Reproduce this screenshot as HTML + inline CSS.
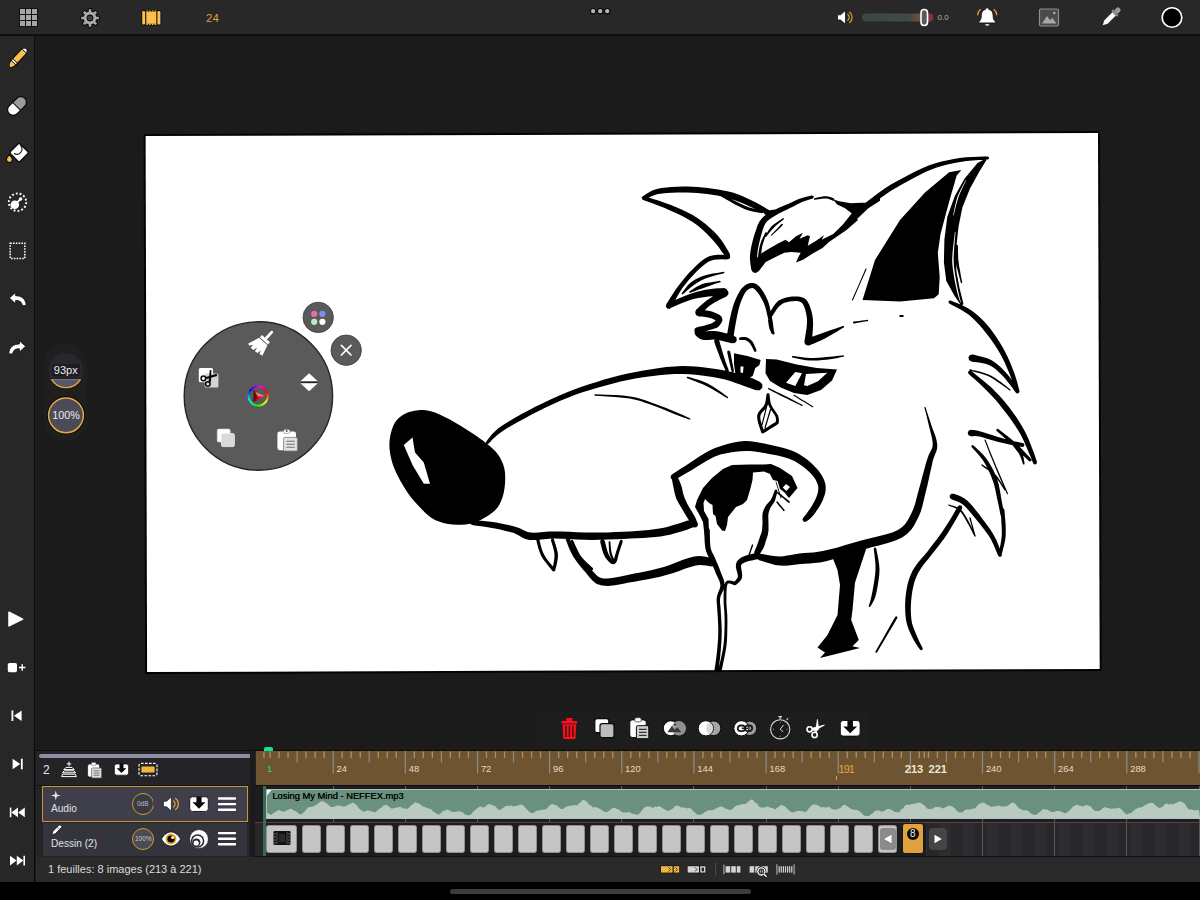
<!DOCTYPE html>
<html><head><meta charset="utf-8"><title>Animation</title><style>
*{box-sizing:border-box;margin:0;padding:0}
html,body{width:1200px;height:900px;overflow:hidden;background:#1b1b1b;font-family:"Liberation Sans",sans-serif;}
.abs{position:absolute}
#topbar{position:absolute;left:0;top:0;width:1200px;height:36px;background:#282828;border-bottom:2px solid #0f0f0f}
#side{position:absolute;left:0;top:36px;width:35px;height:846px;background:#272727;border-right:1px solid #0a0a0a}
#status{position:absolute;left:36px;top:856.7px;width:1164px;height:25.8px;background:#2a2a2a}
#bottom{position:absolute;left:0;top:882.4px;width:1200px;height:18px;background:#000}
#home{position:absolute;left:450px;top:889px;width:301px;height:5px;border-radius:3px;background:#3c3c3c}
#tl{position:absolute;left:36px;top:750px;width:1164px;height:107px;background:#242427;border-top:1px solid #0c0c0c}
.t{position:absolute;white-space:nowrap;line-height:1}
</style></head><body>
<div id="topbar"></div><div id="side"></div>
<svg class="abs" style="left:0;top:0" width="1200" height="900" viewBox="0 0 1200 900"><path d="M143.6 134.2L1100 131.1L1101.7 671L145.1 674Z" fill="#030303"/><path d="M145.6 136.1L1098 133.1L1099.7 669L147.1 672Z" fill="#fff"/><path fill="#000" d="M643.2 199.9L642.0 199.0L641.8 197.5L642.8 196.3L644.4 195.3L646.6 193.7L649.5 192.0L652.9 190.3L656.9 188.9L661.4 188.1L666.4 187.4L671.8 187.0L677.2 186.7L682.5 186.5L687.6 186.5L692.6 186.7L697.7 187.0L702.8 187.5L707.9 188.1L713.0 188.7L718.2 189.5L723.3 190.4L728.5 191.5L733.5 192.8L738.4 194.6L743.3 196.6L748.0 198.7L752.3 200.8L756.3 202.8L760.0 204.8L763.5 206.8L766.7 208.7L769.3 210.3L771.1 211.5L772.2 212.9L772.0 214.6L770.6 215.7L768.9 215.5L766.9 214.5L764.2 213.2L761.0 211.6L757.4 209.9L753.7 208.2L749.7 206.4L745.4 204.5L740.8 202.5L736.1 200.7L731.5 199.2L726.9 197.8L722.0 196.6L717.1 195.6L712.1 194.7L707.1 193.9L702.2 193.4L697.3 192.9L692.4 192.7L687.4 192.5L682.5 192.5L677.4 192.5L672.1 192.7L666.9 193.0L662.2 193.5L658.1 194.1L654.7 195.0L651.6 196.2L648.8 197.6L646.5 198.8L644.7 199.7Z M721.3 196.4L721.4 195.4L722.1 194.8L723.1 194.9L726.3 196.5L730.8 198.9L736.0 201.5L741.2 204.1L745.6 206.1L749.5 207.5L753.4 208.6L757.0 209.5L760.0 210.2L762.3 210.8L763.1 211.3L763.2 212.3L762.7 213.1L761.7 213.2L759.5 212.8L756.4 212.2L752.7 211.4L748.6 210.4L744.4 208.9L739.8 206.8L734.6 204.2L729.5 201.3L725.0 198.8L721.9 197.1Z M642.0 198.9L641.9 197.4L642.9 196.2L644.4 196.1L648.0 197.3L653.1 198.9L659.1 200.8L665.3 202.9L671.0 205.1L676.3 207.2L681.5 209.5L686.7 212.0L691.8 214.6L696.6 217.5L701.3 220.8L705.8 224.2L710.0 227.9L713.9 231.6L717.5 235.3L720.7 239.3L723.7 243.6L726.2 247.7L728.2 251.1L729.7 253.5L730.1 255.5L729.0 257.2L727.0 257.6L725.3 256.5L723.6 254.1L721.3 250.9L718.6 247.1L715.6 243.3L712.5 239.7L709.2 236.2L705.6 232.6L701.7 229.0L697.6 225.6L693.4 222.5L688.9 219.7L684.1 217.0L679.2 214.6L674.1 212.2L669.0 209.9L663.5 207.6L657.5 205.3L651.7 203.1L646.7 201.2L643.1 199.9Z M729.6 255.3L730.3 257.0L729.7 258.6L728.0 259.3L725.5 259.4L722.0 259.3L718.0 259.4L714.1 259.8L710.8 260.7L708.0 262.1L705.2 263.9L702.4 266.2L699.5 268.8L696.6 271.6L693.6 274.7L690.5 278.0L687.5 281.6L684.5 285.2L681.9 288.8L679.4 292.7L676.9 297.0L674.6 301.2L672.7 304.9L671.3 307.5L669.5 308.9L667.3 308.6L665.9 306.8L666.2 304.5L667.7 302.0L669.9 298.5L672.5 294.4L675.3 290.1L678.1 286.2L681.0 282.4L684.0 278.7L687.1 275.0L690.3 271.5L693.4 268.4L696.4 265.5L699.3 262.7L702.4 260.2L705.7 258.1L709.2 256.3L713.3 255.3L717.7 254.8L721.9 254.7L725.5 254.7L728.0 254.7Z M668.5 308.0L667.1 306.6L667.0 304.5L668.4 303.1L671.3 301.8L675.2 300.0L679.9 297.9L684.7 295.9L689.1 294.2L693.0 292.9L696.7 291.8L700.4 290.9L704.0 290.1L707.5 289.4L711.2 288.9L715.1 288.5L718.7 288.3L721.7 288.2L723.8 288.0L726.7 289.1L728.0 291.8L726.9 294.7L724.2 296.0L722.0 296.0L719.0 296.0L715.5 296.1L711.9 296.3L708.5 296.6L705.2 297.0L701.7 297.5L698.2 298.1L694.6 298.8L690.9 299.8L686.8 301.2L682.1 303.1L677.4 305.0L673.4 306.7L670.6 307.9Z M682.5 294.4L681.9 294.1L681.6 293.5L681.9 292.9L683.0 291.5L684.5 289.4L686.4 287.0L688.5 284.5L690.8 282.4L693.2 280.7L695.7 279.2L698.4 277.9L701.3 276.6L704.5 275.5L708.3 274.5L712.7 273.6L717.1 272.9L720.9 272.3L723.6 271.8L724.1 271.9L724.4 272.4L724.3 272.9L723.9 273.2L721.3 273.9L717.5 274.8L713.3 276.0L709.1 277.2L705.5 278.5L702.7 279.8L700.1 281.1L697.7 282.6L695.4 284.1L693.2 285.6L691.0 287.3L688.6 289.2L686.4 291.1L684.5 292.9L683.1 294.1Z M689.7 292.8L689.2 292.4L689.2 291.7L689.6 291.2L691.2 290.2L693.5 288.8L696.2 287.1L699.2 285.5L702.3 284.1L705.9 283.1L709.9 282.4L713.9 281.7L717.4 281.2L719.8 280.8L720.4 280.9L720.7 281.3L720.6 281.9L720.2 282.2L717.8 283.0L714.5 284.1L710.7 285.4L706.9 286.7L703.7 287.9L700.7 288.9L697.6 290.1L694.7 291.2L692.2 292.1L690.4 292.8Z M726.0 289.5L728.2 291.2L728.5 294.0L726.8 296.2L724.5 297.4L721.1 299.0L717.4 301.0L713.7 303.0L710.7 304.9L708.3 306.8L706.0 309.0L703.9 311.1L702.1 313.0L700.8 314.4L698.4 315.3L696.1 314.3L695.2 311.9L696.2 309.6L697.6 308.4L699.5 306.6L701.8 304.5L704.5 302.3L707.3 300.1L710.5 297.9L714.2 295.5L717.8 293.2L721.0 291.2L723.2 289.8Z M696.0 315.1L695.2 312.7L696.4 310.5L698.8 309.7L700.4 309.9L702.7 310.1L705.4 310.3L708.3 310.7L710.9 311.3L713.2 312.1L715.6 313.0L717.9 314.0L720.1 315.3L722.0 317.5L722.3 320.8L721.3 323.1L720.0 324.8L719.0 326.0L718.4 326.7L716.5 327.9L714.3 327.4L713.1 325.5L713.6 323.3L714.2 322.3L715.1 321.1L715.8 320.0L715.9 319.6L716.0 320.5L716.0 320.6L714.8 319.9L713.1 319.1L711.1 318.3L709.1 317.7L707.1 317.2L704.6 316.9L702.1 316.6L699.8 316.4L698.2 316.3Z M717.4 322.4L718.8 324.1L718.6 326.4L716.9 327.8L715.3 328.3L713.1 329.0L710.5 329.8L708.0 330.6L705.9 331.3L703.9 332.0L702.1 332.6L700.8 333.1L700.4 333.3L701.5 332.1L701.6 330.5L701.8 330.4L702.3 330.7L703.1 331.1L703.9 331.3L705.3 331.4L707.5 331.3L710.4 331.1L713.7 331.0L717.2 331.2L720.9 332.0L724.8 333.0L728.6 334.1L731.8 335.0L734.0 335.7L736.4 337.5L736.8 340.5L735.0 342.9L732.0 343.3L729.7 342.8L726.5 341.9L722.8 341.0L719.2 340.3L716.2 339.8L713.6 339.6L710.8 339.8L708.0 340.0L705.0 340.1L702.1 339.7L699.4 338.6L697.3 337.1L695.7 335.4L694.6 333.2L694.5 329.9L696.7 327.4L698.7 326.7L700.5 326.4L702.4 326.1L704.1 325.7L706.2 325.0L708.8 324.2L711.3 323.4L713.6 322.7L715.1 322.2Z M721.1 318.1L722.3 318.9L722.6 320.4L721.8 321.6L720.4 322.6L718.5 324.1L716.1 325.8L713.5 327.4L710.9 328.8L708.0 329.9L704.9 330.8L701.9 331.6L699.3 332.1L697.6 332.6L695.6 332.2L694.4 330.6L694.8 328.6L696.4 327.4L698.3 327.1L700.8 326.6L703.8 326.0L706.6 325.4L709.1 324.6L711.4 323.5L713.8 322.1L716.1 320.6L718.1 319.3L719.6 318.4Z M758.4 271.3L755.9 272.9L752.9 272.2L751.3 269.7L751.0 267.9L750.6 265.3L750.2 262.1L749.9 258.5L750.0 254.8L750.5 251.0L751.2 246.9L752.2 242.8L753.2 238.8L754.3 235.1L755.4 231.7L756.5 228.4L757.7 225.1L759.2 222.1L761.1 219.2L763.4 216.8L765.9 214.8L768.5 213.2L771.1 211.7L773.7 210.3L776.5 208.9L779.4 207.5L782.4 206.3L785.3 205.1L788.0 203.9L790.7 202.7L793.4 201.5L796.0 200.2L798.6 199.1L801.1 198.2L803.6 197.4L806.2 196.7L808.5 196.2L810.5 195.8L811.9 195.5L813.1 195.7L813.8 196.6L813.6 197.8L812.7 198.5L811.3 198.9L809.4 199.5L807.2 200.2L804.8 201.0L802.5 201.8L800.2 202.9L797.8 204.1L795.3 205.4L792.7 206.7L790.0 208.1L787.2 209.4L784.4 210.7L781.5 212.1L778.8 213.4L776.3 214.9L773.8 216.4L771.4 217.9L769.3 219.4L767.4 221.0L765.9 222.8L764.6 225.0L763.5 227.5L762.5 230.4L761.6 233.6L760.7 236.9L759.8 240.5L758.9 244.3L758.1 248.2L757.5 252.0L757.2 255.2L757.3 258.2L757.7 261.1L758.2 264.0L758.7 266.5L759.1 268.3Z M814.2 199.7L813.9 199.2L814.0 198.5L814.5 198.2L816.2 197.8L818.6 197.3L821.3 196.8L824.0 196.3L826.3 196.2L828.3 196.4L830.2 196.9L831.7 197.5L832.9 198.1L833.8 198.5L834.5 199.1L834.4 200.1L833.8 200.8L832.8 200.7L831.9 200.3L830.7 199.8L829.4 199.2L827.9 198.7L826.3 198.4L824.2 198.5L821.6 198.8L818.9 199.2L816.5 199.6L814.9 199.8Z M765.8 237.0L765.3 236.9L765.0 236.4L765.1 235.9L765.9 234.6L767.1 232.7L768.4 230.4L770.0 228.2L771.8 226.1L774.0 224.2L776.5 222.4L779.0 220.7L781.3 219.3L782.8 218.2L783.3 218.1L783.8 218.4L783.9 218.9L783.6 219.4L782.2 220.5L780.1 222.2L777.8 224.1L775.5 226.1L773.6 227.9L771.9 229.7L770.2 231.7L768.6 233.7L767.2 235.5L766.3 236.7Z M771.5 235.8L771.1 235.6L770.9 235.2L771.1 234.8L773.2 232.7L775.2 230.5L777.3 228.4L779.3 226.2L781.4 224.1L782.0 223.8L782.6 224.1L782.9 224.7L782.6 225.3L780.5 227.4L778.3 229.4L776.2 231.5L774.0 233.5L771.9 235.6Z M760.0 263.2L758.8 263.6L757.8 263.0L757.4 261.8L757.7 259.6L758.1 256.5L758.5 252.8L759.1 249.1L759.8 245.7L760.8 242.6L762.0 239.6L763.3 236.7L764.4 234.4L765.2 232.7L765.7 232.2L766.3 232.2L766.8 232.7L766.8 233.3L766.1 235.1L765.1 237.5L764.0 240.4L763.0 243.4L762.2 246.3L761.7 249.5L761.3 253.1L761.0 256.7L760.7 259.9L760.6 262.2Z M764.8 214.6L764.0 213.3L764.4 211.8L765.7 211.0L768.7 210.5L771.7 210.0L774.7 209.5L777.7 209.0L780.7 208.5L782.2 208.9L783.0 210.2L782.6 211.7L781.3 212.5L778.3 213.0L775.3 213.5L772.3 214.0L769.3 214.5L766.3 215.0Z M731.9 340.7L729.5 341.3L727.3 339.9L726.7 337.5L727.1 335.0L727.6 331.6L728.3 327.5L729.0 323.3L729.8 319.3L730.6 315.7L731.4 312.1L732.4 308.4L733.5 304.8L734.7 301.5L736.1 298.2L737.6 295.0L739.3 291.9L741.1 289.1L743.2 286.9L745.4 285.1L747.8 283.7L750.5 282.9L753.4 282.9L756.3 284.0L758.9 286.0L761.2 288.8L763.4 292.1L765.4 295.6L767.1 299.0L768.5 302.6L769.6 306.5L770.5 310.4L771.2 314.1L771.9 317.6L772.6 321.0L773.1 324.5L773.5 327.7L773.8 330.3L774.0 332.3L773.8 333.4L772.7 334.0L771.6 333.8L771.0 332.7L770.6 330.8L770.1 328.2L769.5 325.0L768.8 321.7L768.1 318.4L767.2 315.0L766.4 311.3L765.4 307.6L764.2 304.1L762.9 301.0L761.2 297.9L759.3 294.7L757.2 291.9L755.3 289.8L753.7 288.5L752.5 288.1L751.3 288.2L749.9 288.6L748.3 289.4L746.8 290.6L745.5 292.3L744.1 294.6L742.7 297.4L741.4 300.5L740.3 303.5L739.3 306.7L738.4 310.0L737.7 313.5L736.9 317.1L736.2 320.7L735.5 324.4L734.8 328.6L734.2 332.6L733.7 336.0L733.3 338.5Z M770.4 317.9L768.9 317.7L768.1 316.4L768.3 314.9L769.6 312.9L771.3 310.0L773.4 306.6L775.8 303.3L778.6 300.6L781.8 298.9L785.3 297.7L788.7 297.0L792.0 296.6L795.0 296.4L797.6 296.5L800.1 296.7L802.6 297.4L805.1 298.8L807.2 301.0L808.9 303.9L810.3 307.4L811.5 311.4L812.4 315.5L813.0 319.8L813.1 324.6L812.8 329.9L812.4 335.0L811.9 339.4L811.6 342.5L810.2 344.9L807.5 345.6L805.1 344.2L804.4 341.5L804.9 338.5L805.6 334.1L806.4 329.2L806.9 324.3L807.0 320.2L806.7 316.4L806.0 312.7L805.1 309.2L804.0 306.2L802.8 304.0L801.7 302.7L800.6 301.9L799.1 301.4L797.2 301.1L795.0 301.1L792.4 301.2L789.5 301.5L786.5 302.2L783.7 303.1L781.4 304.4L779.2 306.3L776.9 309.1L774.8 312.2L773.0 315.1L771.7 317.1Z M806.5 345.3L804.6 343.3L804.7 340.5L806.7 338.6L808.7 337.9L811.6 336.9L814.9 335.8L818.5 334.5L822.1 333.3L826.2 331.8L831.0 330.1L835.8 328.4L840.0 327.0L842.9 325.9L843.6 325.9L844.1 326.3L844.1 327.0L843.7 327.5L841.0 329.1L837.2 331.4L832.8 334.0L828.4 336.6L824.5 338.7L820.9 340.5L817.3 342.1L814.0 343.4L811.3 344.6L809.3 345.4Z M865.6 208.9L863.7 207.8L863.1 205.6L864.2 203.7L866.5 201.9L869.8 199.4L873.7 196.5L877.7 193.5L881.5 190.8L884.7 188.6L887.8 186.6L890.9 184.6L894.5 182.5L898.7 180.2L903.9 177.4L909.9 174.2L916.3 171.0L922.8 167.9L929.2 165.3L935.4 163.3L941.6 161.6L947.7 160.2L953.8 159.0L959.7 158.0L965.9 157.3L972.4 156.9L978.5 156.7L983.7 156.6L987.4 156.4L988.5 156.8L989.1 157.9L988.7 159.0L987.6 159.6L983.9 159.8L978.7 160.1L972.6 160.5L966.3 161.1L960.3 162.0L954.5 163.0L948.6 164.3L942.7 165.8L936.7 167.6L930.8 169.7L924.8 172.3L918.5 175.4L912.3 178.7L906.4 181.9L901.3 184.8L897.1 187.2L893.6 189.2L890.6 191.0L887.7 193.0L884.5 195.2L880.9 197.8L877.1 200.8L873.3 203.9L870.1 206.5L867.8 208.3Z M955.8 245.1L956.7 244.8L957.6 245.1L957.9 246.0L958.0 248.1L958.0 251.0L958.1 254.5L958.2 258.2L958.6 261.8L959.1 265.9L960.0 270.6L960.8 275.3L961.6 279.5L962.2 282.3L962.1 282.9L961.7 283.2L961.1 283.1L960.8 282.7L960.1 279.8L959.0 275.8L957.8 271.1L956.6 266.4L955.8 262.2L955.5 258.3L955.3 254.5L955.4 251.0L955.4 248.1L955.5 246.0Z M865.8 268.5L866.2 268.5L866.5 268.8L866.5 269.2L863.8 275.4L861.1 281.6L858.4 287.8L855.7 294.0L853.0 300.2L852.7 300.5L852.3 300.5L852.0 300.2L852.0 299.8L854.7 293.6L857.4 287.4L860.1 281.2L862.8 275.0L865.5 268.8Z M853.2 323.2L852.9 322.6L853.1 322.0L853.6 321.6L856.4 321.3L859.1 320.9L861.9 320.5L864.6 320.2L867.4 319.8L867.9 319.9L868.2 320.4L868.1 320.9L867.6 321.2L864.9 321.6L862.1 322.1L859.4 322.5L856.6 322.9L853.9 323.4Z M899.4 316.6L899.1 316.0L899.4 315.4L900.0 315.1L900.6 315.1L901.2 315.1L901.8 315.1L902.4 315.1L903.0 315.1L903.6 315.4L903.9 316.0L903.6 316.6L903.0 316.9L902.4 316.9L901.8 316.9L901.2 316.9L900.6 316.9L900.0 316.9Z M948.5 302.5L948.6 301.3L949.5 300.5L950.7 300.6L953.5 301.8L957.5 303.3L962.2 305.3L967.1 307.7L971.5 310.4L975.5 313.4L979.3 316.7L982.9 320.3L986.4 324.1L989.8 328.1L993.1 332.4L996.3 337.0L999.3 341.7L1002.2 346.5L1004.8 351.2L1007.2 356.0L1009.4 360.8L1011.4 365.5L1013.1 370.0L1014.7 374.2L1016.0 378.2L1017.2 382.2L1018.1 385.8L1018.9 388.8L1019.4 391.0L1019.2 392.5L1018.0 393.4L1016.5 393.2L1015.6 392.0L1014.9 389.9L1014.1 386.9L1013.0 383.4L1011.8 379.7L1010.3 375.8L1008.7 371.8L1006.8 367.4L1004.8 362.8L1002.6 358.2L1000.2 353.8L997.5 349.3L994.6 344.8L991.5 340.3L988.4 335.9L985.2 331.9L982.0 328.0L978.7 324.3L975.3 320.8L971.9 317.6L968.5 314.6L964.6 311.9L960.2 309.3L955.8 306.9L952.0 304.9L949.3 303.4Z M1019.5 391.8L1018.7 393.1L1017.2 393.5L1015.9 392.7L1014.2 390.4L1011.8 387.1L1009.0 383.4L1006.1 379.7L1003.3 376.6L1000.5 373.8L997.7 371.1L994.8 368.6L991.8 366.5L988.8 364.9L985.4 363.7L981.5 362.9L977.4 362.3L973.9 361.9L971.3 361.6L969.0 360.0L968.4 357.3L970.0 355.0L972.7 354.4L975.1 355.1L978.6 355.9L982.8 357.0L987.2 358.3L991.2 360.1L994.6 362.3L997.9 364.8L1001.0 367.6L1003.9 370.4L1006.7 373.4L1009.6 376.9L1012.5 380.8L1015.2 384.7L1017.5 388.0L1019.1 390.3Z M969.4 370.3L969.3 369.8L969.7 369.4L970.2 369.3L972.6 369.9L976.2 370.8L980.2 371.8L984.3 373.0L987.8 374.2L990.8 375.6L993.4 377.1L995.9 378.6L998.2 380.2L1000.5 381.8L1002.8 383.5L1005.1 385.3L1007.3 387.0L1009.1 388.5L1010.4 389.5L1010.6 389.9L1010.5 390.4L1010.1 390.6L1009.6 390.5L1008.3 389.5L1006.4 388.1L1004.2 386.5L1001.8 384.8L999.5 383.2L997.2 381.7L994.9 380.1L992.5 378.6L990.0 377.1L987.2 375.8L983.8 374.6L979.8 373.3L975.8 372.3L972.3 371.3L969.8 370.7Z M968.0 372.7L968.5 371.2L969.8 370.5L971.3 371.0L974.1 373.3L978.1 376.4L982.8 380.2L987.5 384.2L991.9 388.1L995.7 391.9L999.4 395.8L1003.0 399.8L1006.5 403.9L1009.9 408.2L1013.1 412.7L1016.4 417.3L1019.4 422.0L1022.3 426.7L1024.8 431.2L1027.0 435.7L1029.0 440.2L1030.7 444.4L1032.1 448.3L1033.4 451.6L1034.5 454.5L1035.3 456.9L1036.0 459.0L1036.5 460.6L1036.9 461.8L1036.8 463.3L1035.7 464.4L1034.2 464.3L1033.1 463.2L1032.7 462.0L1032.0 460.4L1031.3 458.5L1030.3 456.1L1029.1 453.4L1027.7 450.1L1026.1 446.3L1024.4 442.2L1022.4 437.9L1020.2 433.8L1017.6 429.5L1014.7 425.1L1011.6 420.6L1008.4 416.1L1005.1 411.8L1001.9 407.7L998.6 403.6L995.2 399.6L991.7 395.7L988.1 391.9L984.1 387.9L979.7 383.8L975.3 379.8L971.4 376.4L968.7 374.0Z M1031.6 460.0L1031.1 461.1L1030.0 461.6L1028.9 461.1L1026.8 459.1L1023.9 456.3L1020.6 453.0L1017.0 449.6L1013.7 446.5L1010.1 443.2L1006.2 439.6L1002.4 436.1L999.0 433.1L996.7 431.0L996.3 430.1L996.5 429.2L997.4 428.8L998.3 429.0L1000.8 431.0L1004.4 433.7L1008.5 437.0L1012.6 440.3L1016.3 443.5L1019.8 446.8L1023.2 450.4L1026.5 453.9L1029.2 456.8L1031.1 458.9Z M1006.3 437.4L1006.7 436.6L1007.6 436.3L1008.4 436.7L1010.3 438.7L1013.1 441.7L1016.2 445.1L1019.1 448.5L1021.3 451.7L1022.7 454.6L1023.6 457.4L1024.0 460.0L1024.3 462.1L1024.6 463.5L1024.5 464.2L1024.0 464.6L1023.3 464.5L1022.9 464.0L1022.4 462.5L1021.8 460.5L1021.0 458.2L1020.0 455.8L1018.7 453.3L1016.6 450.5L1013.9 447.0L1011.0 443.5L1008.4 440.5L1006.6 438.3Z M1024.2 443.9L1024.4 445.4L1023.6 446.7L1022.1 446.9L1019.0 446.3L1014.6 445.5L1009.4 444.4L1004.2 443.3L999.4 442.2L995.0 441.1L990.6 439.7L986.3 438.5L982.5 437.3L979.4 436.6L976.9 436.2L974.9 436.1L973.3 436.2L971.9 436.3L970.8 436.3L968.5 435.2L967.7 432.8L968.8 430.5L971.2 429.7L972.2 429.9L973.6 430.0L975.5 430.3L977.8 430.7L980.6 431.4L984.0 432.4L987.8 433.7L992.0 435.1L996.3 436.5L1000.6 437.8L1005.2 439.0L1010.4 440.2L1015.4 441.4L1019.8 442.4L1022.9 443.1Z M971.3 446.2L971.6 445.4L972.5 445.0L973.4 445.4L975.2 447.1L977.8 449.4L980.8 452.2L983.9 455.5L986.6 458.9L989.0 462.5L991.3 466.4L993.5 470.6L995.5 474.9L997.2 479.3L998.6 483.9L999.6 488.8L1000.5 493.7L1001.2 498.2L1001.9 502.1L1002.6 505.4L1003.2 508.4L1003.7 511.0L1004.1 513.1L1004.4 514.6L1004.1 516.1L1002.9 516.9L1001.4 516.6L1000.6 515.4L1000.3 513.8L999.9 511.8L999.4 509.2L998.8 506.2L998.1 502.9L997.2 499.0L996.3 494.5L995.3 489.8L994.2 485.1L992.8 480.7L991.2 476.6L989.5 472.5L987.5 468.5L985.5 464.6L983.4 461.1L981.0 457.8L978.3 454.5L975.7 451.5L973.3 449.0L971.6 447.1Z M984.5 439.8L984.8 439.5L985.2 439.5L985.5 439.8L986.9 443.1L988.7 447.8L990.9 453.3L993.3 459.1L995.6 464.7L998.2 470.7L1001.0 477.3L1003.9 483.9L1006.3 489.5L1008.0 493.5L1008.0 494.0L1007.7 494.3L1007.3 494.3L1007.0 494.0L1005.2 490.0L1002.7 484.4L999.8 477.9L996.9 471.2L994.4 465.3L992.1 459.6L989.7 453.8L987.6 448.2L985.8 443.6L984.5 440.2Z M981.3 465.1L981.4 464.6L981.9 464.3L982.4 464.4L984.2 465.7L986.8 467.4L989.9 469.5L992.9 471.9L995.6 474.4L998.0 477.4L1000.3 480.9L1002.5 484.5L1004.2 487.6L1005.5 489.7L1005.6 490.1L1005.3 490.5L1004.9 490.6L1004.5 490.3L1003.2 488.2L1001.3 485.2L999.1 481.8L996.7 478.4L994.4 475.6L991.8 473.2L988.9 470.8L986.0 468.7L983.4 466.9L981.6 465.6Z M949.8 497.7L949.7 495.4L951.3 493.8L953.6 493.7L955.2 494.3L957.5 495.1L960.5 496.3L963.7 497.9L966.9 500.2L970.0 503.2L973.1 506.8L976.2 510.7L979.3 514.6L982.1 518.4L984.8 521.9L987.4 525.5L990.0 529.1L992.4 532.7L994.5 536.4L996.5 540.3L998.2 544.5L999.7 548.5L1000.9 551.9L1001.8 554.3L1001.8 555.8L1000.7 556.8L999.2 556.8L998.2 555.7L997.2 553.4L995.8 550.0L994.2 546.2L992.4 542.2L990.5 538.6L988.4 535.3L986.0 531.9L983.4 528.5L980.7 525.1L977.9 521.6L975.0 518.0L971.9 514.2L968.8 510.5L965.8 507.3L963.1 504.8L960.6 503.0L958.0 501.7L955.5 500.7L953.2 499.9L951.4 499.3Z M1000.8 556.3L999.7 556.5L998.7 555.8L998.5 554.7L999.0 552.0L999.8 548.3L1000.6 544.0L1001.4 539.4L1001.8 534.9L1001.8 530.0L1001.5 524.3L1001.2 518.6L1000.8 513.6L1000.5 510.1L1001.0 508.7L1002.4 508.0L1003.8 508.5L1004.5 509.9L1004.7 513.3L1005.1 518.3L1005.6 524.0L1005.8 529.9L1005.7 535.1L1005.2 539.9L1004.2 544.7L1003.1 549.1L1002.2 552.7L1001.5 555.3Z M948.2 505.2L948.2 504.8L948.5 504.5L948.9 504.5L950.5 505.0L952.8 505.7L955.5 506.6L958.2 507.8L960.6 509.3L962.5 511.3L964.2 513.7L965.8 516.2L967.3 518.9L968.8 521.6L970.3 524.6L971.9 527.9L973.4 531.2L974.6 534.0L975.5 536.0L975.5 536.4L975.2 536.8L974.8 536.8L974.5 536.5L973.5 534.5L972.1 531.8L970.5 528.6L968.8 525.3L967.2 522.4L965.7 519.8L964.3 517.2L962.7 514.7L961.1 512.5L959.4 510.7L957.4 509.2L954.9 508.0L952.4 506.9L950.1 506.2L948.6 505.5Z M975.5 536.3L975.2 536.6L974.7 536.5L974.4 536.2L973.4 532.6L972.4 529.0L971.4 525.4L970.4 521.8L969.3 518.2L969.4 517.7L969.8 517.3L970.3 517.4L970.7 517.8L971.6 521.4L972.6 525.0L973.6 528.6L974.6 532.2L975.6 535.8Z M924.5 407.2L924.8 406.9L925.3 407.0L925.6 407.3L926.3 409.7L927.4 412.9L928.6 416.7L930.0 420.8L931.2 424.7L932.5 428.5L934.1 432.6L935.6 436.8L936.7 440.9L937.3 445.0L937.1 448.6L936.3 451.6L935.1 454.3L934.0 457.2L932.8 460.8L931.7 465.9L930.3 471.9L928.9 478.4L927.5 484.9L926.0 490.9L924.7 496.3L923.5 501.6L922.2 506.8L920.6 511.9L918.6 516.7L916.4 521.1L914.1 525.5L911.2 529.8L907.3 533.8L902.1 537.5L895.5 540.6L887.8 543.0L879.7 545.2L871.5 547.3L863.8 549.4L856.2 551.9L848.3 554.5L840.5 557.0L833.0 559.3L826.1 561.2L819.9 562.4L814.4 563.1L809.4 563.4L804.9 563.7L800.6 564.0L796.4 564.5L792.4 565.0L788.4 565.5L784.2 565.8L779.8 565.6L775.0 564.9L770.2 563.6L765.7 562.3L761.9 561.0L759.2 560.2L757.2 558.7L756.8 556.2L758.3 554.2L760.8 553.8L763.6 554.3L767.4 555.0L771.9 555.7L776.3 556.2L780.2 556.4L783.7 556.2L787.1 555.6L790.9 555.0L794.9 554.2L799.4 553.5L804.1 553.0L808.7 552.7L813.3 552.4L818.3 551.8L823.9 550.8L830.4 549.3L837.7 547.4L845.5 545.1L853.4 542.8L861.2 540.6L869.2 538.5L877.5 536.5L885.4 534.6L892.4 532.4L897.9 530.0L901.9 527.3L904.8 524.4L907.1 521.2L909.3 517.4L911.4 513.3L913.3 509.1L914.9 504.6L916.2 499.7L917.5 494.5L919.0 489.1L920.6 483.2L922.3 476.8L924.0 470.4L925.6 464.4L927.2 459.2L928.7 455.1L930.2 452.0L931.4 449.7L932.3 447.6L932.7 445.0L932.6 441.6L931.9 437.7L930.9 433.5L929.8 429.3L928.8 425.3L927.9 421.4L926.9 417.2L925.9 413.3L925.0 410.0L924.4 407.7Z M959.4 505.3L961.2 505.5L962.2 506.9L962.0 508.7L960.0 512.2L957.2 517.2L953.9 522.9L950.4 528.8L947.2 534.0L944.2 538.4L941.1 542.5L938.1 546.4L935.1 550.2L932.1 554.1L928.9 558.2L925.7 562.1L922.6 566.1L919.9 569.9L917.6 573.9L915.9 577.9L914.4 582.1L913.3 586.4L912.4 590.8L911.7 595.4L911.2 600.2L910.9 605.2L910.8 610.4L911.0 615.2L911.4 619.6L912.1 623.4L913.2 627.0L914.5 630.3L915.8 633.5L917.1 636.5L918.3 639.3L919.5 642.0L920.8 644.4L921.8 646.5L922.6 648.0L922.8 649.1L922.0 650.1L920.9 650.3L919.9 649.5L919.0 648.2L917.6 646.3L916.1 644.0L914.4 641.3L912.9 638.5L911.5 635.5L909.9 632.3L908.4 628.7L907.1 624.7L906.1 620.4L905.5 615.7L905.2 610.5L905.1 605.1L905.3 599.7L905.8 594.6L906.5 589.8L907.4 585.0L908.7 580.3L910.3 575.7L912.4 571.1L915.0 566.7L918.1 562.6L921.4 558.6L924.8 554.8L927.9 550.9L930.9 547.0L933.9 543.1L936.9 539.3L939.8 535.3L942.8 531.0L946.0 526.1L949.6 520.4L953.0 514.7L955.9 509.8L958.0 506.3Z M874.0 548.0L874.8 547.5L875.7 547.7L876.2 548.6L876.8 551.4L877.6 555.3L878.5 560.0L879.2 565.0L879.5 570.0L879.2 575.2L878.5 580.7L877.6 586.2L876.7 591.2L875.7 595.5L874.6 598.8L873.3 601.6L872.1 603.8L871.0 605.4L870.3 606.6L869.8 607.1L869.1 607.0L868.7 606.6L868.7 605.9L869.2 604.5L869.8 602.7L870.4 600.5L871.1 597.8L871.8 594.5L872.6 590.4L873.5 585.4L874.4 580.1L875.1 574.8L875.5 570.0L875.5 565.3L875.1 560.4L874.6 555.8L874.1 551.8L873.8 548.9Z M895.9 616.3L896.9 616.4L897.5 617.2L897.3 618.1L893.3 625.0L889.2 631.8L885.1 638.7L881.1 645.6L877.0 652.4L876.5 652.8L875.8 652.7L875.4 652.2L875.5 651.6L879.4 644.6L883.4 637.7L887.3 630.8L891.2 623.8L895.2 616.9Z M714.4 339.8L715.9 338.5L717.9 338.7L719.2 340.2L719.8 342.5L720.7 345.7L721.8 349.5L722.9 353.3L723.9 356.6L724.9 359.8L726.0 363.0L727.1 366.0L728.1 368.6L728.8 370.4L728.7 371.6L727.9 372.5L726.7 372.4L725.8 371.6L725.1 369.8L724.0 367.3L722.7 364.3L721.4 361.1L720.1 358.0L718.9 354.6L717.5 350.9L716.1 347.2L715.0 344.0L714.2 341.8Z M727.4 351.1L728.4 350.5L729.6 350.7L730.2 351.7L731.0 355.5L731.7 359.3L732.4 363.1L733.2 366.9L733.9 370.7L733.7 371.7L733.0 372.2L732.0 372.0L731.5 371.3L730.6 367.5L729.8 363.7L728.9 359.9L728.0 356.1L727.2 352.3Z M739.2 339.6L738.8 338.8L739.1 337.9L739.9 337.5L740.7 337.3L741.9 337.1L743.3 337.0L744.9 336.9L746.5 337.2L747.8 337.8L749.1 338.5L750.3 339.4L751.5 340.5L752.6 341.8L753.6 343.4L754.5 345.4L755.3 347.3L756.0 349.0L756.4 350.2L756.5 351.1L755.8 351.8L754.9 351.9L754.2 351.2L753.6 350.1L752.8 348.4L751.9 346.6L750.9 344.9L750.0 343.6L749.2 342.7L748.3 341.8L747.4 341.2L746.4 340.6L745.5 340.2L744.6 340.0L743.4 339.9L742.1 339.9L741.0 339.9L740.1 339.9Z M792.0 357.2L791.9 356.5L792.2 356.0L792.9 355.9L795.2 356.2L798.4 356.7L802.2 357.3L806.2 357.8L810.0 358.1L813.9 358.0L818.0 357.8L822.2 357.5L826.3 357.1L829.9 356.8L833.1 356.5L836.3 356.1L839.1 355.8L841.5 355.5L843.2 355.3L843.7 355.4L844.0 355.9L843.9 356.4L843.4 356.7L841.7 357.0L839.4 357.6L836.6 358.2L833.5 358.8L830.1 359.2L826.5 359.7L822.5 360.1L818.2 360.4L814.0 360.6L810.0 360.5L806.0 360.2L801.9 359.5L798.1 358.7L794.8 358.0L792.5 357.5Z M768.0 388.9L768.1 388.4L768.5 388.0L769.0 388.1L770.9 389.0L773.6 390.3L776.8 391.9L780.3 393.5L783.7 395.2L787.5 397.1L791.7 399.3L796.0 401.5L799.7 403.4L802.3 404.7L802.7 405.1L802.6 405.6L802.2 406.0L801.7 405.9L799.1 404.6L795.3 402.8L791.0 400.7L786.7 398.6L782.9 396.8L779.5 395.1L776.1 393.3L773.0 391.7L770.3 390.3L768.4 389.3Z M793.4 395.4L793.5 395.0L793.9 394.7L794.3 394.8L798.0 397.1L801.8 399.4L805.5 401.6L809.3 403.9L813.0 406.2L813.3 406.6L813.2 407.0L812.8 407.3L812.4 407.2L808.7 404.9L804.9 402.6L801.2 400.4L797.4 398.1L793.7 395.8Z M768.4 318.8L769.7 318.0L771.2 318.4L772.0 319.7L772.1 320.8L772.4 322.5L772.7 324.3L773.0 326.1L773.2 327.5L773.5 328.7L773.7 330.0L774.0 331.1L774.3 332.1L774.5 332.8L774.5 333.8L773.8 334.5L772.8 334.5L772.1 333.8L771.8 333.2L771.2 332.3L770.6 331.2L769.9 329.9L769.4 328.5L769.0 326.8L768.7 324.9L768.4 323.0L768.2 321.4L768.0 320.3Z M767.0 393.5L768.2 393.2L769.2 393.7L769.5 394.9L769.4 396.3L769.1 398.4L768.8 400.8L768.3 403.4L767.4 406.0L765.9 408.3L764.1 410.4L762.3 412.3L760.9 414.2L760.3 416.2L760.4 418.9L761.2 422.4L762.3 426.0L763.5 429.2L764.2 431.5L764.1 432.7L763.2 433.5L762.0 433.4L761.2 432.5L760.5 430.2L759.4 427.0L758.2 423.2L757.3 419.3L757.1 415.8L758.1 412.8L759.8 410.4L761.8 408.3L763.5 406.4L764.6 404.6L765.3 402.6L765.7 400.3L766.0 398.0L766.3 396.0L766.5 394.5Z M762.4 433.5L761.4 432.8L761.2 431.7L761.9 430.7L764.8 428.8L767.7 427.0L770.6 425.1L773.5 423.2L776.5 421.4L777.6 421.2L778.6 421.9L778.8 423.0L778.1 424.0L775.2 425.9L772.3 427.7L769.4 429.6L766.5 431.5L763.5 433.3Z M778.4 423.8L777.3 424.3L776.2 423.8L775.7 422.7L775.8 421.8L775.9 420.6L776.0 419.4L775.8 418.0L775.4 416.5L774.5 414.8L773.1 412.8L771.5 410.5L770.0 408.2L768.7 405.8L767.9 403.4L767.3 400.8L767.0 398.4L766.7 396.3L766.5 394.9L766.8 393.8L767.8 393.2L768.9 393.5L769.5 394.5L769.7 396.0L769.9 398.0L770.2 400.3L770.6 402.7L771.3 404.8L772.3 406.8L773.7 409.0L775.3 411.2L776.8 413.4L778.0 415.5L778.6 417.4L778.9 419.2L778.9 420.7L778.8 421.9L778.9 422.7Z M766.7 404.5L767.1 404.4L767.5 404.7L767.6 405.1L766.6 409.1L765.6 413.1L764.6 417.1L763.6 421.1L762.6 425.1L762.3 425.5L761.9 425.6L761.5 425.3L761.4 424.9L762.4 420.9L763.4 416.9L764.4 412.9L765.4 408.9L766.4 404.9Z M770.7 407.5L771.2 407.4L771.5 407.7L771.6 408.2L770.4 412.2L769.2 416.2L768.0 420.2L766.8 424.2L765.6 428.2L765.3 428.5L764.8 428.6L764.5 428.3L764.4 427.8L765.6 423.8L766.8 419.8L768.0 415.8L769.2 411.8L770.4 407.8Z M487.6 444.1L486.5 443.7L485.9 442.6L486.3 441.5L487.6 439.8L489.4 437.5L491.7 434.6L494.8 431.4L498.6 428.1L503.5 424.8L509.1 421.2L515.4 417.5L522.0 413.8L528.8 410.2L535.8 406.5L543.3 402.9L551.0 399.2L558.8 395.8L566.5 392.5L574.1 389.6L581.6 386.8L589.1 384.3L596.7 381.9L604.2 379.6L611.7 377.5L619.2 375.6L626.7 373.8L634.2 372.2L642.0 370.7L649.9 369.4L658.0 368.2L666.2 367.1L674.4 366.4L682.5 366.0L690.6 366.2L698.7 366.8L706.6 367.7L714.0 368.7L720.8 369.8L727.0 370.9L732.7 372.3L737.9 373.7L742.5 375.0L746.6 376.3L750.2 377.6L753.5 378.8L756.1 380.0L758.2 381.0L759.8 381.7L762.3 384.2L762.3 387.8L759.8 390.3L756.2 390.3L754.6 389.7L752.5 388.9L749.9 387.9L746.9 386.9L743.4 385.7L739.4 384.3L735.0 382.7L730.2 381.1L725.0 379.5L719.2 378.2L712.7 377.0L705.5 375.9L697.9 375.0L690.1 374.3L682.5 374.0L674.8 374.1L666.9 374.5L658.9 375.2L650.9 376.2L643.0 377.3L635.4 378.5L628.0 380.0L620.6 381.6L613.2 383.4L605.8 385.4L598.3 387.4L590.9 389.7L583.4 392.0L575.9 394.6L568.5 397.5L560.9 400.6L553.2 404.0L545.6 407.6L538.2 411.3L531.2 414.8L524.5 418.4L517.9 422.0L511.7 425.5L506.1 428.8L501.4 431.9L497.6 434.7L494.6 437.4L492.1 439.8L490.2 442.0L488.7 443.5Z M594.5 395.5L594.3 395.0L594.5 394.5L595.0 394.3L600.0 394.5L607.0 394.7L615.1 395.1L623.2 395.6L630.2 396.4L635.9 397.5L641.1 398.9L645.9 400.5L650.5 402.2L655.4 403.9L660.6 405.9L666.2 408.0L671.5 410.2L676.4 412.3L680.4 414.0L683.5 415.3L685.9 416.4L687.7 417.3L689.1 417.9L690.2 418.5L690.5 418.8L690.5 419.2L690.2 419.5L689.8 419.5L688.6 419.2L687.1 418.7L685.2 418.1L682.7 417.2L679.6 416.0L675.5 414.4L670.6 412.4L665.3 410.2L659.8 408.0L654.6 406.1L649.8 404.3L645.1 402.7L640.4 401.1L635.4 399.8L629.8 398.6L623.0 397.7L615.0 397.0L606.9 396.4L599.9 396.0L595.0 395.7Z M686.7 377.9L686.7 377.2L687.1 376.7L687.8 376.7L690.5 377.5L694.4 378.7L699.0 380.1L703.7 381.8L708.1 383.8L712.5 386.3L717.1 389.3L721.5 392.3L725.2 395.1L727.9 396.9L728.2 397.4L728.1 397.9L727.6 398.2L727.1 398.1L724.3 396.4L720.4 394.0L715.8 391.2L711.2 388.5L706.9 386.2L702.7 384.3L698.1 382.4L693.7 380.7L689.9 379.3L687.2 378.3Z M470.4 524.1L469.9 522.2L470.9 520.4L472.8 519.9L475.5 520.1L479.2 520.5L483.7 520.9L488.4 521.4L493.0 522.1L497.5 522.8L502.3 523.7L507.1 524.7L511.7 525.7L516.0 526.9L519.7 528.2L522.7 529.8L525.2 531.1L527.6 532.0L530.5 532.6L534.1 532.8L538.4 532.5L543.3 532.0L548.8 531.6L555.0 531.4L561.8 531.5L569.3 531.8L577.1 532.2L584.9 532.5L592.5 532.6L600.1 532.6L607.7 532.4L615.4 532.1L622.8 531.8L629.8 531.4L636.4 531.0L642.8 530.5L648.7 529.9L654.3 529.3L659.4 528.6L663.9 527.7L668.1 526.7L671.8 525.5L675.4 524.4L678.8 523.4L681.9 522.4L684.9 521.5L687.7 520.6L690.0 519.8L691.6 519.3L694.7 519.4L696.7 521.6L696.6 524.7L694.4 526.7L692.7 527.4L690.5 528.3L687.7 529.4L684.6 530.5L681.2 531.6L677.8 532.6L674.1 533.6L670.1 534.7L665.6 535.6L660.6 536.4L655.2 537.0L649.4 537.5L643.3 537.9L636.9 538.3L630.2 538.6L623.2 539.0L615.7 539.3L608.0 539.6L600.2 539.8L592.5 539.9L584.7 539.7L576.7 539.4L568.9 539.1L561.6 538.8L555.0 538.6L549.3 538.8L544.0 539.3L539.0 539.8L534.2 540.1L529.5 539.9L525.4 538.9L522.1 537.4L519.4 535.8L516.9 534.4L514.0 533.1L510.1 532.0L505.7 530.9L501.0 529.8L496.4 528.8L492.0 527.9L487.6 527.2L483.0 526.5L478.6 525.9L474.9 525.5L472.2 525.1Z M536.2 538.0L537.1 537.2L538.3 537.4L539.0 538.4L539.6 540.6L540.4 543.8L541.3 547.4L542.5 551.0L543.9 554.3L545.8 557.4L548.3 560.9L551.0 564.2L553.3 567.0L555.0 569.0L555.3 570.2L554.7 571.2L553.6 571.6L552.5 571.0L550.9 569.0L548.5 566.1L545.9 562.8L543.2 559.2L541.1 555.7L539.6 552.1L538.3 548.2L537.3 544.5L536.6 541.4L536.0 539.1Z M554.6 571.3L553.4 571.5L552.4 570.8L552.2 569.7L552.6 567.6L553.3 564.7L553.9 561.4L554.4 558.1L554.5 555.1L554.2 552.1L553.4 548.7L552.5 545.4L551.6 542.5L551.0 540.4L551.1 539.3L552.1 538.5L553.2 538.6L554.0 539.6L554.6 541.6L555.6 544.4L556.6 547.9L557.5 551.5L558.0 554.9L557.8 558.4L557.2 562.0L556.5 565.4L555.7 568.3L555.3 570.3Z M600.5 540.3L601.9 539.2L603.7 539.5L604.8 540.9L605.3 542.9L605.9 545.6L606.7 548.8L607.6 551.7L608.5 554.0L609.6 556.0L611.0 558.0L612.3 559.6L613.4 560.5L613.3 560.7L613.2 560.7L613.9 559.3L614.6 557.0L615.3 554.4L616.0 552.0L616.8 549.7L617.7 547.1L618.5 544.5L619.3 542.3L619.8 540.8L620.5 539.9L621.7 539.8L622.6 540.5L622.7 541.7L622.2 543.3L621.5 545.5L620.6 548.0L619.8 550.6L619.0 553.0L618.4 555.3L617.8 557.8L617.1 560.4L616.2 562.6L614.2 564.3L611.6 563.9L609.6 562.5L607.7 560.6L606.0 558.4L604.5 556.0L603.3 553.2L602.2 550.0L601.4 546.8L600.7 544.0L600.2 542.1Z M608.9 541.4L609.4 541.1L610.1 541.4L610.4 541.9L610.5 543.5L610.7 545.7L610.9 548.3L611.2 550.7L611.6 552.8L612.1 554.4L612.7 556.0L613.3 557.5L613.9 558.7L614.3 559.6L614.3 560.3L613.9 560.8L613.2 560.8L612.7 560.4L612.3 559.5L611.6 558.3L610.7 556.9L610.0 555.1L609.4 553.2L609.1 551.0L608.9 548.4L608.8 545.9L608.7 543.6L608.6 542.1Z M565.7 538.0L566.7 536.9L568.2 536.9L569.3 538.0L570.3 540.2L571.6 543.3L573.2 546.9L575.0 550.6L577.0 553.8L579.1 556.7L581.5 559.6L584.1 562.5L586.8 565.3L589.7 568.0L592.4 570.8L594.9 573.6L597.3 575.9L599.8 577.5L603.1 578.4L607.8 578.5L613.8 577.7L620.6 576.5L627.6 575.0L634.3 573.6L640.4 572.4L646.4 571.2L652.2 569.9L658.0 568.5L663.8 566.9L669.8 564.9L676.1 562.5L682.4 560.0L688.5 557.9L694.2 556.5L699.4 556.0L704.1 556.5L707.9 557.3L710.7 558.1L712.7 558.6L715.3 560.3L715.9 563.2L714.2 565.8L711.3 566.4L709.1 566.1L706.2 565.6L703.0 565.2L699.6 565.1L695.8 565.5L691.2 566.7L685.5 568.6L679.2 570.9L672.6 573.2L666.2 575.1L660.1 576.7L654.0 578.0L648.0 579.2L641.9 580.3L635.7 581.4L629.1 582.6L622.1 584.0L614.9 585.2L608.1 585.9L601.9 585.6L596.8 583.9L592.9 581.1L590.1 578.0L587.7 574.9L585.3 572.0L582.7 569.2L580.1 566.0L577.5 562.8L575.2 559.5L573.0 556.2L571.1 552.6L569.3 548.7L567.8 544.9L566.6 541.7L565.7 539.5Z M570.8 540.6L571.5 539.9L572.4 539.8L573.1 540.5L574.2 542.7L575.6 545.9L577.3 549.6L579.1 553.2L581.0 556.3L583.3 559.0L586.0 561.8L588.7 564.3L591.1 566.5L592.8 568.1L593.2 569.0L592.9 569.8L592.0 570.2L591.2 569.9L589.5 568.4L587.0 566.2L584.2 563.6L581.4 560.7L579.0 557.7L576.9 554.4L575.0 550.7L573.3 547.0L571.9 543.8L570.9 541.5Z M672.8 479.9L670.9 478.6L670.6 476.3L671.9 474.4L674.2 473.0L677.3 471.0L681.0 468.6L684.8 466.2L688.1 464.0L691.2 462.0L694.1 460.0L697.1 458.0L700.1 456.1L703.1 454.2L706.0 452.6L708.7 451.0L711.7 449.5L715.0 448.0L718.9 446.7L723.3 445.3L728.3 443.8L733.7 442.5L739.3 441.5L744.9 441.0L750.4 441.2L755.9 441.9L761.2 442.9L766.2 444.1L770.9 445.1L775.3 446.0L779.6 446.9L783.7 448.0L787.7 449.2L791.5 450.5L795.1 452.1L798.5 453.8L801.6 455.7L804.6 457.7L807.4 459.8L810.3 462.2L813.0 464.7L815.6 467.4L818.0 470.1L820.0 472.8L821.8 475.4L823.2 478.1L824.4 480.8L825.3 483.7L825.7 486.7L825.7 489.8L825.2 492.9L824.4 495.8L823.4 498.6L822.2 501.4L820.7 504.3L819.0 507.3L817.1 510.1L815.3 512.7L813.6 514.9L812.0 516.8L810.3 518.4L808.8 519.7L807.6 520.6L806.8 521.3L805.0 522.0L803.2 521.3L802.5 519.5L803.2 517.7L804.0 516.8L804.9 515.7L806.0 514.4L807.2 512.8L808.4 511.1L809.8 508.9L811.5 506.4L813.1 503.7L814.6 501.1L815.8 498.6L816.7 496.2L817.5 493.7L818.0 491.4L818.3 489.3L818.3 487.3L818.0 485.4L817.4 483.4L816.5 481.4L815.4 479.3L814.0 477.2L812.2 475.0L810.1 472.7L807.7 470.4L805.1 468.2L802.6 466.2L800.0 464.4L797.3 462.7L794.5 461.1L791.6 459.7L788.5 458.5L785.1 457.4L781.5 456.4L777.6 455.5L773.5 454.7L769.1 453.9L764.4 453.1L759.5 452.3L754.6 451.6L749.7 451.1L745.1 451.0L740.4 451.2L735.3 451.7L730.2 452.5L725.4 453.4L721.1 454.3L717.7 455.4L714.9 456.5L712.3 457.8L709.7 459.2L706.9 460.8L703.9 462.4L701.1 464.2L698.1 466.1L695.0 468.0L691.9 470.0L688.3 472.0L684.4 474.3L680.6 476.4L677.4 478.3L675.1 479.6Z M671.8 475.6L673.6 474.1L675.9 474.3L677.4 476.1L677.9 477.4L678.7 479.3L679.7 481.5L680.6 483.8L681.4 486.0L682.0 488.1L682.4 490.1L682.8 492.1L683.2 493.9L683.8 495.6L684.4 497.4L685.2 499.3L686.1 501.3L687.0 503.3L688.0 505.3L689.2 507.3L690.4 509.3L691.7 511.3L692.9 513.3L694.0 515.3L695.0 517.1L695.9 519.0L696.6 520.7L697.2 522.1L697.7 523.1L697.9 525.4L696.4 527.2L694.1 527.4L692.3 525.9L691.8 524.9L691.0 523.6L690.0 522.1L689.0 520.4L688.0 518.7L686.9 517.0L685.7 515.0L684.4 512.9L683.2 510.8L682.0 508.7L680.8 506.7L679.6 504.7L678.4 502.7L677.2 500.6L676.2 498.4L675.5 496.1L674.9 493.9L674.4 491.9L674.0 489.9L673.6 488.0L673.2 485.9L672.7 483.6L672.3 481.3L671.9 479.3L671.6 477.9Z M705.0 528.1L706.9 527.2L708.9 528.0L709.8 529.9L709.8 532.5L709.9 536.1L710.0 540.2L710.2 544.2L710.6 547.5L711.2 550.0L712.1 552.2L713.2 554.3L714.3 556.5L715.4 558.9L716.4 561.4L717.4 563.7L718.4 566.1L719.4 568.6L720.3 571.1L721.3 573.6L722.4 576.2L723.5 579.0L724.3 581.9L724.6 585.0L724.1 588.0L723.1 590.8L721.9 593.3L720.8 595.6L720.2 597.8L720.0 599.9L720.0 602.1L720.2 604.3L720.5 606.9L720.7 609.9L720.9 613.4L721.2 617.4L721.4 621.5L721.6 625.8L721.7 630.0L721.7 634.0L721.6 638.1L721.4 642.1L721.1 646.1L720.8 650.2L720.4 654.5L719.9 659.2L719.3 663.7L718.8 667.5L718.5 670.3L717.7 671.6L716.2 672.0L714.9 671.2L714.5 669.7L714.9 667.0L715.5 663.2L716.1 658.7L716.7 654.1L717.2 649.8L717.5 645.9L717.8 641.9L718.1 637.9L718.2 634.0L718.3 630.0L718.2 625.9L718.0 621.7L717.8 617.6L717.5 613.6L717.3 610.1L717.1 607.2L716.9 604.6L716.7 602.2L716.6 599.8L716.8 597.2L717.5 594.4L718.5 591.8L719.5 589.3L720.2 587.1L720.4 585.0L720.0 582.9L719.2 580.6L718.1 578.1L716.8 575.5L715.7 572.9L714.7 570.5L713.7 568.1L712.6 565.8L711.6 563.4L710.6 561.1L709.6 558.9L708.4 556.7L707.3 554.3L706.2 551.6L705.4 548.5L704.9 544.8L704.6 540.5L704.4 536.3L704.3 532.6L704.2 530.1Z M775.3 489.7L776.4 489.6L777.3 490.3L777.4 491.4L777.1 492.7L776.7 494.5L776.1 496.6L775.5 498.9L774.8 500.9L773.8 502.7L772.8 504.3L771.7 505.7L770.8 507.0L770.2 508.2L769.7 509.5L769.2 510.7L768.9 511.9L768.6 513.1L768.4 514.4L768.3 515.8L768.3 517.4L768.4 519.2L768.4 521.1L768.5 523.0L768.5 524.9L768.5 526.7L768.5 528.6L768.5 530.6L768.2 532.6L767.9 534.5L767.4 536.4L766.8 538.1L766.3 539.7L765.8 541.1L765.5 542.3L765.1 543.5L764.8 544.7L764.3 546.0L763.7 547.4L762.9 548.9L762.0 550.6L761.0 552.1L760.2 553.4L759.6 554.4L757.9 555.8L755.6 555.6L754.2 553.9L754.4 551.6L754.8 550.6L755.4 549.2L756.1 547.6L756.8 546.0L757.3 544.6L757.7 543.5L758.0 542.5L758.4 541.5L758.7 540.3L759.2 538.9L759.7 537.4L760.3 535.8L760.9 534.3L761.4 532.8L761.8 531.4L762.0 529.9L762.2 528.3L762.3 526.6L762.4 524.8L762.5 523.0L762.5 521.2L762.4 519.4L762.4 517.5L762.4 515.5L762.6 513.6L763.0 511.8L763.5 510.2L764.2 508.7L764.9 507.2L765.8 505.8L766.9 504.2L768.1 502.9L769.3 501.6L770.4 500.4L771.2 499.1L772.0 497.5L772.8 495.6L773.6 493.6L774.2 491.8L774.6 490.6Z M758.7 553.2L760.2 555.2L759.8 557.7L757.8 559.2L755.8 559.6L753.1 560.2L750.1 560.8L747.3 561.5L745.2 562.2L743.7 562.9L742.6 563.5L742.0 564.0L741.5 564.6L741.1 565.4L741.0 566.8L741.3 569.1L741.8 571.8L742.2 574.6L742.1 577.4L741.1 579.7L739.7 581.5L738.2 582.9L737.0 584.0L736.2 584.7L735.0 585.2L733.8 584.7L733.3 583.5L733.8 582.3L734.6 581.4L735.7 580.3L736.7 579.1L737.6 577.8L737.9 576.6L737.8 575.1L737.3 572.8L736.5 570.1L735.9 567.3L735.9 564.6L736.6 562.3L737.7 560.4L739.2 559.0L740.9 557.8L742.8 556.8L745.4 555.7L748.5 554.8L751.7 553.9L754.4 553.3L756.2 552.8Z M736.5 582.7L736.7 584.0L735.8 585.0L734.5 585.2L733.2 584.8L731.4 584.1L729.6 583.5L728.3 583.5L727.7 583.8L727.1 585.6L726.7 588.5L726.5 592.2L726.4 596.1L726.4 600.0L726.4 603.7L726.7 607.4L727.0 611.4L727.3 615.6L727.4 620.0L727.4 624.7L727.3 629.7L727.2 634.8L727.0 640.0L726.5 645.2L725.7 650.7L724.6 656.5L723.4 662.2L722.4 667.0L721.7 670.4L720.9 671.4L719.6 671.7L718.6 670.9L718.3 669.6L719.1 666.2L720.2 661.4L721.5 655.9L722.7 650.1L723.5 644.8L724.0 639.8L724.3 634.7L724.5 629.6L724.6 624.7L724.6 620.0L724.5 615.7L724.3 611.6L724.0 607.6L723.7 603.8L723.6 600.0L723.6 596.1L723.7 592.1L723.8 588.3L724.3 584.9L725.3 582.2L727.4 580.5L730.0 580.4L732.4 580.9L734.2 581.5L735.5 581.8Z M752.2 544.4L752.7 544.3L753.1 544.7L753.2 545.2L752.4 547.4L751.7 549.6L750.9 551.8L750.2 554.0L749.4 556.2L749.1 556.6L748.5 556.7L748.1 556.3L748.1 555.8L748.8 553.6L749.6 551.4L750.3 549.2L751.1 547.0L751.8 544.8Z M776.3 501.9L776.5 501.4L777.1 501.3L777.6 501.5L779.0 503.2L780.4 504.9L781.8 506.6L783.2 508.3L784.6 510.0L784.7 510.6L784.5 511.1L783.9 511.2L783.4 511.0L782.0 509.3L780.6 507.6L779.2 505.9L777.8 504.2L776.4 502.5Z M777.1 493.1L777.3 492.5L777.9 492.1L778.5 492.3L780.7 494.1L782.9 495.9L785.1 497.7L787.3 499.5L789.5 501.3L789.9 501.9L789.7 502.5L789.1 502.9L788.5 502.7L786.3 500.9L784.1 499.1L781.9 497.3L779.7 495.5L777.5 493.7Z M775.6 481.8L775.9 481.6L776.2 481.6L776.4 481.9L777.4 485.1L778.4 488.3L779.4 491.5L780.4 494.7L781.4 497.9L781.4 498.2L781.1 498.4L780.8 498.4L780.6 498.1L779.6 494.9L778.6 491.7L777.6 488.5L776.6 485.3L775.6 482.1Z M768.0 249.2L778.5 243.3L785.5 239.8L789.0 242.2L796.0 236.3L803.0 232.8L799.5 238.7L807.7 235.2L810.0 236.3L807.7 245.7L815.8 241.0L824.0 235.2L821.7 239.8L833.3 234.0L842.7 224.7L852.0 213.0L858.0 220.0L846.5 230.0L837.0 236.5L829.0 242.0L822.5 248.0L812.3 253.8L803.0 259.7L796.0 262.6L798.3 257.3L800.7 252.7L791.3 252.1L784.3 252.7L775.0 257.3L765.7 262.0L758.7 271.3L752.8 267.8L757.0 258.0L762.0 253.0Z M833.3 199.6L839.2 201.3L850.8 203.2L866.0 202.5L880.0 197.3L880.0 200.8L868.3 208.3L857.0 219.0L852.0 213.6L845.0 208.3L836.8 204.3Z M862.5 300.0L875.0 260.0L900.0 220.0L925.0 192.5L949.1 172.2L961.4 170.0L956.7 175.5L949.1 201.7L940.6 233.8L937.8 252.7L939.7 277.3L938.7 294.3L934.0 298.3L900.0 301.5L875.0 300.5Z M988.0 157.6L979.4 171.5L970.0 188.5L962.4 207.4L958.6 226.3L956.7 243.3L955.8 258.4L956.5 272.0L959.5 288.0L963.5 304.0L961.5 306.0L954.8 296.2L946.3 281.1L943.9 262.2L944.4 239.5L947.3 216.8L954.8 196.0L964.3 179.0L977.5 163.0Z M832.5 557.5L866.2 548.8L860.0 567.5L855.0 582.5L852.5 610.0L851.2 620.0L858.8 640.0L852.5 646.2L860.0 648.0L820.0 658.0L825.0 652.5L817.5 647.5L827.5 635.0L837.5 615.0L840.0 585.0L837.5 570.0Z M734.0 353.3L747.3 356.0L760.7 360.0L759.3 365.3L755.3 368.0L752.7 376.0L747.3 378.7L735.3 373.3L734.0 364.0Z M766.0 359.0L776.7 359.5L796.7 364.5L816.7 368.0L837.0 369.5L832.0 380.5L821.0 390.0L807.3 395.0L794.0 393.0L780.7 387.5L770.0 381.0L765.5 373.3Z M390.0 437.5L390.8 433.6L391.9 429.6L393.3 425.8L395.0 422.5L397.0 419.8L399.4 417.4L402.0 415.4L405.0 413.8L408.4 412.3L412.2 411.2L416.1 410.4L420.0 410.0L423.6 410.0L427.2 410.4L430.9 411.2L435.0 412.5L439.6 414.4L444.7 416.9L449.9 419.6L455.0 422.5L460.1 425.5L465.3 428.7L470.4 431.9L475.0 435.0L479.2 437.9L483.1 440.7L486.7 443.5L490.0 446.2L493.0 449.0L495.6 451.6L498.0 454.4L500.0 457.5L501.7 460.9L503.2 464.5L504.3 468.3L505.0 472.5L505.2 477.3L505.1 482.5L504.6 487.7L503.8 492.5L502.7 496.7L501.3 500.6L499.6 504.2L497.5 507.5L494.9 510.4L491.8 513.0L488.4 515.4L485.0 517.5L481.5 519.5L477.8 521.2L474.0 522.7L470.0 523.8L465.8 524.4L461.4 524.8L456.9 524.8L452.5 524.5L448.0 523.9L443.4 522.9L439.0 521.6L435.0 520.0L431.6 518.1L428.6 515.8L425.7 513.2L422.5 510.0L418.9 506.3L415.0 502.0L411.1 497.4L407.5 492.5L404.0 487.1L400.6 481.2L397.5 475.4L395.0 470.0L393.1 465.2L391.7 460.8L390.7 456.6L390.0 452.5L389.5 448.6L389.4 444.8L389.5 441.2Z M695.0 507.0L697.0 500.0L703.0 488.0L712.0 478.0L723.0 469.0L732.0 465.0L750.0 464.5L764.0 464.5L771.0 464.0L780.0 468.0L792.0 476.0L797.5 488.0L789.0 498.0L784.5 492.5L780.0 489.0L777.5 481.0L773.0 480.0L770.0 474.0L764.0 471.5L753.0 472.5L752.5 480.0L750.0 490.0L747.0 500.0L743.0 504.0L736.0 507.0L732.0 512.0L728.0 517.0L727.0 525.0L725.0 531.0L722.0 530.5L717.0 524.0L715.5 516.0L713.0 514.0L712.5 505.0L709.0 503.0L705.0 499.0L703.5 503.0L704.0 511.0L708.5 519.0L709.0 533.0L709.5 545.0L705.0 545.0L704.0 531.0L703.0 522.0L699.0 514.0Z"/>
<path fill="#fff" d="M740.5 366.5L743.5 366.5L743.0 373.0L740.5 372.5Z M786.0 382.7L795.3 372.0L802.0 373.3L795.3 386.0Z M806.0 374.0L827.3 372.7L818.0 381.3L807.3 386.0L804.0 385.3Z M403.8 445.0L412.5 437.5L415.0 452.5L423.8 462.5L430.0 483.8L423.8 483.8L412.5 465.0Z M786.0 484.0L790.0 487.0L786.3 491.0L782.8 487.5Z M955.0 231.8L955.2 231.7L955.4 231.8L955.5 232.0L955.2 235.8L954.7 241.2L954.2 247.3L953.8 253.4L953.6 258.4L953.7 262.3L953.9 265.7L954.3 268.8L954.7 271.8L955.2 274.9L955.7 278.2L956.3 281.6L956.9 284.9L957.5 288.0L958.1 290.9L958.7 293.6L959.3 296.2L959.9 298.5L960.4 300.5L960.8 301.9L960.8 302.1L960.6 302.3L960.4 302.3L960.2 302.1L959.8 300.7L959.1 298.7L958.4 296.4L957.6 293.8L956.9 291.1L956.3 288.3L955.6 285.1L954.9 281.8L954.3 278.4L953.8 275.1L953.3 272.0L952.9 269.0L952.5 265.8L952.2 262.4L952.2 258.4L952.5 253.3L953.1 247.2L953.8 241.1L954.5 235.7L954.9 232.0Z M965.9 179.8L966.1 179.8L966.2 179.9L966.2 180.1L965.1 182.4L963.5 185.7L961.7 189.5L959.9 193.5L958.5 197.2L957.3 201.0L956.2 205.1L955.2 209.1L954.4 212.6L953.8 215.1L953.7 215.3L953.4 215.3L953.2 215.2L953.2 214.9L953.7 212.5L954.4 209.0L955.3 204.9L956.3 200.7L957.5 196.8L959.1 193.1L961.0 189.1L962.9 185.4L964.6 182.2L965.8 179.9Z"/></svg>
<svg class="abs" style="left:0;top:0" width="1200" height="900" viewBox="0 0 1200 900"><defs><filter id="ib" x="-20%" y="-20%" width="140%" height="140%"><feGaussianBlur stdDeviation="0.35"/></filter></defs><circle cx="258.4" cy="396" r="74.2" fill="#5a5a5a" stroke="#242424" stroke-width="1.4"/><circle cx="318.2" cy="317.4" r="15.2" fill="#5a5a5a" stroke="#3a3a3a" stroke-width="0.8"/><circle cx="346.2" cy="350.2" r="15.2" fill="#5a5a5a" stroke="#3a3a3a" stroke-width="0.8"/><circle cx="314.2" cy="313.8" r="3.1" fill="#f06aa8"/><circle cx="322.4" cy="313.8" r="3.1" fill="#7f8cf0"/><circle cx="314.2" cy="321.8" r="3.1" fill="#b9ecc6"/><circle cx="322.4" cy="321.8" r="3.1" fill="#fff"/><path d="M341.4 345.4l9.6 9.6M351 345.4l-9.6 9.6" stroke="#fff" stroke-width="1.7" stroke-linecap="round"/><g transform="translate(261.2 343.8) rotate(42) scale(1.22 1.18)"><rect x="-1.1" y="-14.5" width="2.2" height="9" rx="1.1" fill="#fff"/><path d="M-4.4 -6h8.8v2.6h-8.8z" fill="#fff"/><path d="M-4.6 -2.6h9.2l2.6 9.4l-2.6 0.6l-1.2 -3l-0.6 3.4l-2.6 0.4l-0.6 -3.4l-1 3.6l-2.8 0l-0.2 -3l-2 2.6l-1.6 -0.8z" fill="#fff"/></g><path d="M300.4 381.2h17.4l-8.7-7.9z" fill="#fff"/><path d="M300.4 383.3h17.4l-8.7 7.9z" fill="#fff"/><path d="M300.8 382.25h16.6" stroke="#161616" stroke-width="1.1"/><rect x="198.8" y="368" width="14.2" height="14.2" rx="1.5" fill="#fff"/><rect x="204.6" y="373.6" width="13.8" height="13.8" rx="1.5" fill="#d4d4d4"/><g fill="none" stroke="#0a0a0a" stroke-width="1.5"><circle cx="203.4" cy="378.4" r="2.3"/><circle cx="207.8" cy="384" r="2.3"/></g><path d="M205.2 377.2l11.6-3.4l0.4 2.2l-10.6 3z" fill="#0a0a0a"/><path d="M208.6 381.6l1.2-11.6l1.6 0.2l-0.4 12z" fill="#0a0a0a"/><defs><linearGradient id="tri" x1="0" x2="1" y1="0" y2="0"><stop offset="0" stop-color="#6a1010"/><stop offset="0.5" stop-color="#e01818"/><stop offset="1" stop-color="#ff5050"/></linearGradient></defs><path d="M258.20 386.40A9.60 9.60 0 0 1 260.88 386.78" stroke="hsl(300,100%,50%)" stroke-width="1.9" fill="none"/><path d="M260.68 386.73A9.60 9.60 0 0 1 263.17 387.79" stroke="hsl(315,100%,50%)" stroke-width="1.9" fill="none"/><path d="M263.00 387.69A9.60 9.60 0 0 1 265.13 389.36" stroke="hsl(330,100%,50%)" stroke-width="1.9" fill="none"/><path d="M264.99 389.21A9.60 9.60 0 0 1 266.61 391.38" stroke="hsl(345,100%,50%)" stroke-width="1.9" fill="none"/><path d="M266.51 391.20A9.60 9.60 0 0 1 267.52 393.71" stroke="hsl(0,100%,50%)" stroke-width="1.9" fill="none"/><path d="M267.47 393.52A9.60 9.60 0 0 1 267.80 396.20" stroke="hsl(15,100%,50%)" stroke-width="1.9" fill="none"/><path d="M267.80 396.00A9.60 9.60 0 0 1 267.42 398.68" stroke="hsl(30,100%,50%)" stroke-width="1.9" fill="none"/><path d="M267.47 398.48A9.60 9.60 0 0 1 266.41 400.97" stroke="hsl(45,100%,50%)" stroke-width="1.9" fill="none"/><path d="M266.51 400.80A9.60 9.60 0 0 1 264.84 402.93" stroke="hsl(60,100%,50%)" stroke-width="1.9" fill="none"/><path d="M264.99 402.79A9.60 9.60 0 0 1 262.82 404.41" stroke="hsl(75,100%,50%)" stroke-width="1.9" fill="none"/><path d="M263.00 404.31A9.60 9.60 0 0 1 260.49 405.32" stroke="hsl(90,100%,50%)" stroke-width="1.9" fill="none"/><path d="M260.68 405.27A9.60 9.60 0 0 1 258.00 405.60" stroke="hsl(105,100%,50%)" stroke-width="1.9" fill="none"/><path d="M258.20 405.60A9.60 9.60 0 0 1 255.52 405.22" stroke="hsl(120,100%,50%)" stroke-width="1.9" fill="none"/><path d="M255.72 405.27A9.60 9.60 0 0 1 253.23 404.21" stroke="hsl(135,100%,50%)" stroke-width="1.9" fill="none"/><path d="M253.40 404.31A9.60 9.60 0 0 1 251.27 402.64" stroke="hsl(150,100%,50%)" stroke-width="1.9" fill="none"/><path d="M251.41 402.79A9.60 9.60 0 0 1 249.79 400.62" stroke="hsl(165,100%,50%)" stroke-width="1.9" fill="none"/><path d="M249.89 400.80A9.60 9.60 0 0 1 248.88 398.29" stroke="hsl(180,100%,50%)" stroke-width="1.9" fill="none"/><path d="M248.93 398.48A9.60 9.60 0 0 1 248.60 395.80" stroke="hsl(195,100%,50%)" stroke-width="1.9" fill="none"/><path d="M248.60 396.00A9.60 9.60 0 0 1 248.98 393.32" stroke="hsl(210,100%,50%)" stroke-width="1.9" fill="none"/><path d="M248.93 393.52A9.60 9.60 0 0 1 249.99 391.03" stroke="hsl(225,100%,50%)" stroke-width="1.9" fill="none"/><path d="M249.89 391.20A9.60 9.60 0 0 1 251.56 389.07" stroke="hsl(240,100%,50%)" stroke-width="1.9" fill="none"/><path d="M251.41 389.21A9.60 9.60 0 0 1 253.58 387.59" stroke="hsl(255,100%,50%)" stroke-width="1.9" fill="none"/><path d="M253.40 387.69A9.60 9.60 0 0 1 255.91 386.68" stroke="hsl(270,100%,50%)" stroke-width="1.9" fill="none"/><path d="M255.72 386.73A9.60 9.60 0 0 1 258.40 386.40" stroke="hsl(285,100%,50%)" stroke-width="1.9" fill="none"/><path d="M253.6 389.8v12.4l11.4-6.2z" fill="url(#tri)"/><path d="M253.6 389.8l4.5 6.2l-4.5 6.2z" fill="#3a0a0a" opacity="0.55"/><path d="M255 391.2l8.4 4.6l-6 0.6z" fill="#ffd0d0" opacity="0.55"/><rect x="217.2" y="429" width="13" height="13" rx="1.6" fill="#fff" stroke="#d0d0d0" stroke-width="0.6"/><rect x="221.4" y="433.6" width="13" height="13" rx="1.6" fill="#d9d9d9" stroke="#efefef" stroke-width="0.8"/><rect x="277.4" y="431.4" width="18.6" height="18.8" rx="2.4" fill="#fff"/><rect x="283.6" y="429.4" width="6.2" height="4" rx="1.6" fill="#fff" stroke="#8a8a8a" stroke-width="0.7"/><circle cx="286.7" cy="431" r="0.9" fill="#444"/><rect x="283.6" y="437.4" width="13.8" height="13.6" rx="1" fill="#e2e2e2" stroke="#7a7a7a" stroke-width="0.8"/><path d="M286.4 441.2h8.4M286.4 444.2h8.4M286.4 447.2h8.4" stroke="#707070" stroke-width="1.1"/></svg>
<svg class="abs" style="left:0;top:0" width="1200" height="900" viewBox="0 0 1200 900"><rect x="44" y="343" width="43" height="98" rx="21.5" fill="#1f1f1f"/><circle cx="66" cy="370.3" r="17.2" fill="#28282c"/><rect x="52" y="364" width="28" height="12.4" rx="3" fill="#1d1d21"/><path d="M50.6 378.6a18 18 0 0 0 30.8 0z" fill="#0c0c18"/><path d="M51.6 379a16.9 16.9 0 0 0 28.8 0z" fill="#55566a"/><path d="M51.4 379.2a16.9 16.9 0 0 0 29.2 0" fill="none" stroke="#e6a93c" stroke-width="1.4"/><path d="M52 379.6h28" stroke="#8c8c94" stroke-width="0.7"/><circle cx="66" cy="415.3" r="19.2" fill="#0b0b18"/><circle cx="66" cy="415.3" r="17.4" fill="#4b4b57" stroke="#e6a93c" stroke-width="1.5"/></svg><div class="t" style="left:53.8px;top:364.6px;font-size:11px;color:#ececec">93px</div><div class="t" style="left:52.2px;top:410.2px;font-size:10.8px;color:#ececec">100%</div>
<svg class="abs" style="left:0;top:0" width="1200" height="900" viewBox="0 0 1200 900"><rect x="19" y="8" width="19" height="19" rx="1.5" fill="#121212"/><rect x="20" y="9" width="5" height="5" fill="#a6a6a6"/><rect x="26" y="9" width="5" height="5" fill="#a6a6a6"/><rect x="32" y="9" width="5" height="5" fill="#a6a6a6"/><rect x="20" y="15" width="5" height="5" fill="#a6a6a6"/><rect x="26" y="15" width="5" height="5" fill="#a6a6a6"/><rect x="32" y="15" width="5" height="5" fill="#a6a6a6"/><rect x="20" y="21" width="5" height="5" fill="#a6a6a6"/><rect x="26" y="21" width="5" height="5" fill="#a6a6a6"/><rect x="32" y="21" width="5" height="5" fill="#a6a6a6"/><path d="M98.82 16.82L98.82 19.18L96.26 19.35L95.38 21.48L97.08 23.40L95.40 25.08L93.48 23.38L91.35 24.26L91.18 26.82L88.82 26.82L88.65 24.26L86.52 23.38L84.60 25.08L82.92 23.40L84.62 21.48L83.74 19.35L81.18 19.18L81.18 16.82L83.74 16.65L84.62 14.52L82.92 12.60L84.60 10.92L86.52 12.62L88.65 11.74L88.82 9.18L91.18 9.18L91.35 11.74L93.48 12.62L95.40 10.92L97.08 12.60L95.38 14.52L96.26 16.65Z" fill="none" stroke="#0a0a0a" stroke-width="2" stroke-linejoin="round"/><path d="M98.82 16.82L98.82 19.18L96.26 19.35L95.38 21.48L97.08 23.40L95.40 25.08L93.48 23.38L91.35 24.26L91.18 26.82L88.82 26.82L88.65 24.26L86.52 23.38L84.60 25.08L82.92 23.40L84.62 21.48L83.74 19.35L81.18 19.18L81.18 16.82L83.74 16.65L84.62 14.52L82.92 12.60L84.60 10.92L86.52 12.62L88.65 11.74L88.82 9.18L91.18 9.18L91.35 11.74L93.48 12.62L95.40 10.92L97.08 12.60L95.38 14.52L96.26 16.65Z M86.97 18.00a3.03 3.03 0 1 0 6.05 0a3.03 3.03 0 1 0 -6.05 0Z" fill="#a9a9a9" fill-rule="evenodd"/><circle cx="90" cy="18" r="3.03" fill="#3c3c3c" stroke="#0a0a0a" stroke-width="1"/><g><rect x="141.2" y="10" width="20.2" height="15.4" rx="2.8" fill="#0c0c1a"/><rect x="142.2" y="11" width="3" height="13.4" rx="1.2" fill="#fcc04a"/><rect x="146.3" y="11.6" width="10" height="12.2" fill="#fcc04a"/><rect x="157.4" y="11" width="3" height="13.4" rx="1.2" fill="#fcc04a"/><path d="M146.3 11h1.6M149.1 11h1.6M151.9 11h1.6M154.7 11h1.6M146.3 24.4h1.6M149.1 24.4h1.6M151.9 24.4h1.6M154.7 24.4h1.6" stroke="#fcc04a" stroke-width="1.2"/></g><g fill="#b6b6b6" stroke="#090909" stroke-width="1.1"><circle cx="593.1" cy="11.2" r="2.7"/><circle cx="600.2" cy="11.2" r="2.7"/><circle cx="607.2" cy="11.2" r="2.7"/></g><path d="M837.5 14.8h3l5-4.3v13.8l-5-4.3h-3z" fill="#fff" stroke="#101014" stroke-width="0.8" stroke-linejoin="round"/><path d="M847.8 14.5a3.6 3.6 0 0 1 0 5.8" fill="none" stroke="#d9a036" stroke-width="1.2" stroke-linecap="round"/><path d="M849.6 12.2a6.6 6.6 0 0 1 0 10.4" fill="none" stroke="#d9a036" stroke-width="1.2" stroke-linecap="round"/><defs><linearGradient id="sl" x1="0" x2="1" y1="0" y2="0"><stop offset="0" stop-color="#3a4743"/><stop offset="0.65" stop-color="#3f4a45"/><stop offset="0.78" stop-color="#6a4b3a"/><stop offset="0.9" stop-color="#7a4a3c"/><stop offset="1" stop-color="#7c2b3a"/></linearGradient></defs><rect x="862" y="13.5" width="71.5" height="8" rx="4" fill="url(#sl)"/><rect x="921" y="9.5" width="6.5" height="16" rx="3.2" fill="#5a5a5a" stroke="#fff" stroke-width="1.6"/><path d="M987.2 7.8c-0.9 0-1.5 0.6-1.5 1.4c-3 0.8-4.4 3.3-4.4 6.3c0 3.6-0.9 5-2.5 6.4v1h16.8v-1c-1.6-1.4-2.5-2.8-2.5-6.4c0-3-1.4-5.5-4.4-6.3c0-0.8-0.6-1.4-1.5-1.4z" fill="#fff" stroke="#0e0e14" stroke-width="0.8"/><path d="M985 24.2a2.3 2.3 0 0 0 4.4 0z" fill="#fff"/><path d="M980.3 9.6a8 8 0 0 0-2.6 5.2" fill="none" stroke="#d9a036" stroke-width="1.3" stroke-linecap="round"/><path d="M994.1 9.6a8 8 0 0 1 2.6 5.2" fill="none" stroke="#d9a036" stroke-width="1.3" stroke-linecap="round"/><rect x="1039.5" y="9" width="19" height="17" rx="1.5" fill="#4a4a4a" stroke="#8f8f8f" stroke-width="1.2"/><path d="M1042 23.5l5-7.5l3.2 4.2l2-2.4l4.3 5.7z" fill="#a8a8a8"/><circle cx="1054.3" cy="13" r="1.3" fill="#a8a8a8"/><g transform="translate(1110.5 17.5) rotate(45)"><rect x="-2.6" y="-13" width="5.2" height="6" rx="2.2" fill="#9a9a9a"/><rect x="-4" y="-7.6" width="8" height="2.6" rx="0.8" fill="#8a8a8a"/><path d="M-2.4 -5h4.8v11.5l-2.4 4.5l-2.4 -4.5z" fill="#fff"/></g><circle cx="1172" cy="17.5" r="9.8" fill="#000" stroke="#fff" stroke-width="1.6"/></svg><div class="t" style="left:206px;top:12.5px;font-size:11.5px;color:#d9a444">24</div><div class="t" style="left:937.5px;top:13.5px;font-size:8px;color:#b0b0b0">0.0</div>
<svg class="abs" style="left:0;top:0" width="1200" height="900" viewBox="0 0 1200 900"><g transform="translate(18.2 57.6) rotate(43)"><path d="M-3.9 -9.6l3.9 -3.6l3.9 3.6v15.6c0 3-1 5.4-3.4 7.6c-1.6 -1.4 -4.4 -3.6 -4.4 -7.6z" fill="#0c0c18"/><path d="M-2.8 -8.4h5.6v12.6h-5.6z" fill="#fbbf45"/><path d="M-2.8 -9.4l2.8 -2.6l2.8 2.6v0.2h-5.6z" fill="#fff"/><path d="M-2.8 5h5.6v1.5h-5.6z" fill="#fff"/><path d="M-2.8 7.3h5.6c0 2.4 -1 4 -2.4 5.4c-1.6 -1.2 -3.2 -3 -3.2 -5.4z" fill="#fbbf45"/></g><g transform="translate(17 106) rotate(45)"><rect x="-6.2" y="-11.6" width="12.4" height="23.2" rx="6.2" fill="#0c0c10"/><path d="M-5 0v-5.4a5 5 0 0 1 10 0v5.4z" fill="#9c9c9c"/><path d="M-5 1v4.4a5 5 0 0 0 10 0v-4.4z" fill="#fff"/></g><g transform="translate(19.1 152.7) rotate(45)"><rect x="-6.9" y="-6.9" width="13.8" height="13.8" rx="1.6" fill="#fff" stroke="#0c0c12" stroke-width="1.4"/></g><path d="M20.6 145.6A5.2 5.2 0 0 1 14.2 153.6" fill="none" stroke="#1c1c22" stroke-width="1.1" stroke-linecap="round"/><path d="M9.4 154.6c-2.2 2.5-3 3.8-3 5a3 3 0 0 0 6 0c0-1.6-1.6-3.2-3-5z" fill="#fbbf45" stroke="#0c0c18" stroke-width="1.1"/><circle cx="17.5" cy="202.2" r="8.7" fill="none" stroke="#fff" stroke-width="1.9" stroke-dasharray="1.9 2.0"/><circle cx="14.8" cy="204.8" r="4.3" fill="#fff"/><path d="M17 202.6l3.4-3.4" stroke="#fff" stroke-width="1.8"/><circle cx="20.6" cy="199" r="1.8" fill="#fff"/><rect x="10.2" y="243.2" width="14.6" height="15.2" fill="none" stroke="#fff" stroke-width="1.5" stroke-dasharray="1.6 1.2"/><path d="M9.4 298L15.6 292.4V295.7C21.4 295.7 26 298.8 26.2 305.6H22.4C21.8 301.8 19.6 300.5 15.6 300.5V303.8Z" fill="#fff" stroke="#0c0c10" stroke-width="0.8" stroke-linejoin="round"/><path transform="translate(35 48.3) scale(-1 1)" d="M9.4 298L15.6 292.4V295.7C21.4 295.7 26 298.8 26.2 305.6H22.4C21.8 301.8 19.6 300.5 15.6 300.5V303.8Z" fill="#fff" stroke="#0c0c10" stroke-width="0.8" stroke-linejoin="round"/><path d="M9 612.3v13.6l13.6-6.8z" fill="#fff" stroke="#fff" stroke-width="1.6" stroke-linejoin="round"/><rect x="7.8" y="663" width="9.2" height="9.2" rx="1.6" fill="#fff"/><path d="M19 667.5h6.4M22.2 664.3v6.4" stroke="#fff" stroke-width="1.4"/><path d="M12.4 710.4v10.6" stroke="#fff" stroke-width="1.8"/><path d="M21.6 710.4v10.6l-7.6-5.3z" fill="#fff"/><path d="M21.8 758.7v10.6" stroke="#fff" stroke-width="1.8"/><path d="M12.6 758.7v10.6l7.6-5.3z" fill="#fff"/><path d="M10.6 807.6v9.6" stroke="#fff" stroke-width="1.6"/><path d="M18 807.6v9.6l-6.6-4.8zM24.8 807.6v9.6l-6.6-4.8z" fill="#fff"/><path d="M24.2 855.8v9.6" stroke="#fff" stroke-width="1.6"/><path d="M10 855.8v9.6l6.6-4.8zM16.8 855.8v9.6l6.6-4.8z" fill="#fff"/></svg>
<svg class="abs" style="left:0;top:0" width="1200" height="900" viewBox="0 0 1200 900"><rect x="537" y="710" width="332" height="38" rx="4" fill="#1d1d1d"/><g transform="translate(569.4 728.3)"><path d="M-7.8 -7.2h15.6v2.4h-15.6zM-3 -10.2h6v3h-6z" fill="#f8101c"/><path d="M-6.8 -4h13.6l-0.6 13.6a1.4 1.4 0 0 1 -1.4 1.2h-9.6a1.4 1.4 0 0 1 -1.4 -1.2z" fill="#f8101c"/><path d="M-3.5 -2.6v11.4M0 -2.6v11.4M3.5 -2.6v11.4" stroke="#2a0808" stroke-width="1.3"/></g><g transform="translate(604.4 728.3)"><rect x="-9.6" y="-9.6" width="14" height="14" rx="2.2" fill="#fff" stroke="#0a0a0a" stroke-width="1.2"/><rect x="-4.4" y="-4.6" width="14" height="14" rx="2.2" fill="#bdbdbd" stroke="#0a0a0a" stroke-width="1.2"/></g><g transform="translate(639.4 728.3)"><rect x="-9.6" y="-8.4" width="16.4" height="17.6" rx="2.4" fill="#fff" stroke="#0a0a0a" stroke-width="1"/><rect x="-4.6" y="-10.6" width="6.4" height="4.2" rx="1.6" fill="#fff" stroke="#444" stroke-width="0.8"/><rect x="-3" y="-2.6" width="12.4" height="13" rx="1.4" fill="#cfcfcf" stroke="#0a0a0a" stroke-width="1"/><path d="M-0.4 1h7.6M-0.4 4h7.6M-0.4 7h7.6" stroke="#333" stroke-width="1.2"/></g><g transform="translate(674.4 728.3)"><circle cx="-3.6" cy="0" r="7.6" fill="#fff" stroke="#0a0a0a" stroke-width="1.2"/><circle cx="4.4" cy="0" r="7.2" fill="#9b9b9b" opacity="0.92"/><path d="M-7 4l4.4-6.4l3 3.8l2.2-2.6l4.4 5.2z" fill="#3a3a3a"/><circle cx="0.8" cy="-3.6" r="1.1" fill="#3a3a3a"/></g><g transform="translate(709.4 728.3)"><circle cx="4" cy="0" r="7.4" fill="#a5a5a5" stroke="#0a0a0a" stroke-width="1"/><circle cx="-3.6" cy="0" r="7.6" fill="#fff" stroke="#0a0a0a" stroke-width="1"/><path d="M0.2 -6.2a7.4 7.4 0 0 0 0 12.4a7.6 7.6 0 0 0 0-12.4z" fill="#d8d8d8"/></g><g transform="translate(745.2 728.3)"><circle cx="4.4" cy="0" r="7.2" fill="#9b9b9b" stroke="#0a0a0a" stroke-width="1"/><circle cx="-3.8" cy="0" r="7.6" fill="#fff" stroke="#0a0a0a" stroke-width="1"/><g fill="none" stroke="#1a1a1a" stroke-width="1.8"><rect x="-7.4" y="-2.8" width="7.4" height="5.6" rx="2.8"/><rect x="-0.4" y="-2.8" width="7.4" height="5.6" rx="2.8"/></g><path d="M-3.4 0h6.6" stroke="#1a1a1a" stroke-width="1.6"/></g><g transform="translate(780.2 728.3)"><circle cx="0" cy="1" r="9.6" fill="#1a1a1a" stroke="#d8d8d8" stroke-width="1.1"/><path d="M-1.8 -11.6h3.6M0 -11.6v2.6M6.4 -8.4l1.6-1.6" stroke="#d8d8d8" stroke-width="1.2"/><path d="M0 1l3.4-4.4M0 1l3 2.4" stroke="#d8d8d8" stroke-width="1"/><path d="M0 -6.4v1.2M0 7.4v1.2M-7.4 1h1.2M6.2 1h1.2" stroke="#aaa" stroke-width="0.8"/></g><g transform="translate(815.2 728.3)" fill="none" stroke="#fff" stroke-width="1.6"><circle cx="-5.6" cy="1" r="2.6"/><circle cx="-0.6" cy="6.6" r="2.6"/><path d="M-3.2 0l12.4-3.2l-10.4 5.8z" fill="#fff" stroke-width="0.8"/><path d="M0.2 4.2l2-13l1.2 9.6z" fill="#fff" stroke-width="0.8"/></g><g transform="translate(850.2 728.3) scale(1.15)"><rect x="-8.6" y="-6.8" width="17.2" height="13.6" rx="2.6" fill="#fff" stroke="#0a0a0a" stroke-width="0.8"/><path d="M-2.4 -6.8h4.8v5.2h3.6l-6 5.8l-6-5.8h3.6z" fill="#0c0c10"/></g></svg>
<div id="tl"></div>
<div class="abs" style="left:255.5px;top:751px;width:945px;height:33.6px;background:#6e5430"></div>
<div class="abs" style="left:255px;top:784.6px;width:945px;height:1.4px;background:#100e0c"></div>
<svg class="abs" style="left:0;top:0" width="1200" height="900" viewBox="0 0 1200 900"><rect x="263.3" y="751.5" width="1.3" height="6.4" fill="#a8946c"/><rect x="923.7" y="751.5" width="1.3" height="6.4" fill="#a8946c"/><rect x="269.4" y="751.5" width="1.3" height="6.4" fill="#a8946c"/><rect x="278.4" y="751.5" width="1.3" height="6.4" fill="#a8946c"/><rect x="287.4" y="751.5" width="1.3" height="6.4" fill="#a8946c"/><rect x="296.5" y="751" width="1.2" height="11.5" fill="#8e8c88"/><rect x="305.4" y="751.5" width="1.3" height="6.4" fill="#a8946c"/><rect x="314.5" y="751.5" width="1.3" height="6.4" fill="#a8946c"/><rect x="323.5" y="751.5" width="1.3" height="6.4" fill="#a8946c"/><rect x="332.6" y="751" width="1.2" height="22.5" fill="#8e8c88"/><rect x="341.5" y="751.5" width="1.3" height="6.4" fill="#a8946c"/><rect x="350.5" y="751.5" width="1.3" height="6.4" fill="#a8946c"/><rect x="359.6" y="751.5" width="1.3" height="6.4" fill="#a8946c"/><rect x="368.6" y="751" width="1.2" height="11.5" fill="#8e8c88"/><rect x="377.6" y="751.5" width="1.3" height="6.4" fill="#a8946c"/><rect x="386.6" y="751.5" width="1.3" height="6.4" fill="#a8946c"/><rect x="395.6" y="751.5" width="1.3" height="6.4" fill="#a8946c"/><rect x="404.7" y="751" width="1.2" height="22.5" fill="#8e8c88"/><rect x="413.7" y="751.5" width="1.3" height="6.4" fill="#a8946c"/><rect x="422.7" y="751.5" width="1.3" height="6.4" fill="#a8946c"/><rect x="431.7" y="751.5" width="1.3" height="6.4" fill="#a8946c"/><rect x="440.8" y="751" width="1.2" height="11.5" fill="#8e8c88"/><rect x="449.7" y="751.5" width="1.3" height="6.4" fill="#a8946c"/><rect x="458.8" y="751.5" width="1.3" height="6.4" fill="#a8946c"/><rect x="467.8" y="751.5" width="1.3" height="6.4" fill="#a8946c"/><rect x="476.9" y="751" width="1.2" height="22.5" fill="#8e8c88"/><rect x="485.8" y="751.5" width="1.3" height="6.4" fill="#a8946c"/><rect x="494.8" y="751.5" width="1.3" height="6.4" fill="#a8946c"/><rect x="503.9" y="751.5" width="1.3" height="6.4" fill="#a8946c"/><rect x="512.9" y="751" width="1.2" height="11.5" fill="#8e8c88"/><rect x="521.9" y="751.5" width="1.3" height="6.4" fill="#a8946c"/><rect x="530.9" y="751.5" width="1.3" height="6.4" fill="#a8946c"/><rect x="539.9" y="751.5" width="1.3" height="6.4" fill="#a8946c"/><rect x="549.0" y="751" width="1.2" height="22.5" fill="#8e8c88"/><rect x="558.0" y="751.5" width="1.3" height="6.4" fill="#a8946c"/><rect x="567.0" y="751.5" width="1.3" height="6.4" fill="#a8946c"/><rect x="576.0" y="751.5" width="1.3" height="6.4" fill="#a8946c"/><rect x="585.1" y="751" width="1.2" height="11.5" fill="#8e8c88"/><rect x="594.1" y="751.5" width="1.3" height="6.4" fill="#a8946c"/><rect x="603.1" y="751.5" width="1.3" height="6.4" fill="#a8946c"/><rect x="612.1" y="751.5" width="1.3" height="6.4" fill="#a8946c"/><rect x="621.2" y="751" width="1.2" height="22.5" fill="#8e8c88"/><rect x="630.1" y="751.5" width="1.3" height="6.4" fill="#a8946c"/><rect x="639.1" y="751.5" width="1.3" height="6.4" fill="#a8946c"/><rect x="648.2" y="751.5" width="1.3" height="6.4" fill="#a8946c"/><rect x="657.2" y="751" width="1.2" height="11.5" fill="#8e8c88"/><rect x="666.2" y="751.5" width="1.3" height="6.4" fill="#a8946c"/><rect x="675.2" y="751.5" width="1.3" height="6.4" fill="#a8946c"/><rect x="684.2" y="751.5" width="1.3" height="6.4" fill="#a8946c"/><rect x="693.3" y="751" width="1.2" height="22.5" fill="#8e8c88"/><rect x="702.3" y="751.5" width="1.3" height="6.4" fill="#a8946c"/><rect x="711.3" y="751.5" width="1.3" height="6.4" fill="#a8946c"/><rect x="720.3" y="751.5" width="1.3" height="6.4" fill="#a8946c"/><rect x="729.4" y="751" width="1.2" height="11.5" fill="#8e8c88"/><rect x="738.4" y="751.5" width="1.3" height="6.4" fill="#a8946c"/><rect x="747.4" y="751.5" width="1.3" height="6.4" fill="#a8946c"/><rect x="756.4" y="751.5" width="1.3" height="6.4" fill="#a8946c"/><rect x="765.5" y="751" width="1.2" height="22.5" fill="#8e8c88"/><rect x="774.4" y="751.5" width="1.3" height="6.4" fill="#a8946c"/><rect x="783.5" y="751.5" width="1.3" height="6.4" fill="#a8946c"/><rect x="792.5" y="751.5" width="1.3" height="6.4" fill="#a8946c"/><rect x="801.5" y="751" width="1.2" height="11.5" fill="#8e8c88"/><rect x="810.5" y="751.5" width="1.3" height="6.4" fill="#a8946c"/><rect x="819.5" y="751.5" width="1.3" height="6.4" fill="#a8946c"/><rect x="828.5" y="751.5" width="1.3" height="6.4" fill="#a8946c"/><rect x="837.6" y="751" width="1.2" height="22.5" fill="#8e8c88"/><rect x="846.6" y="751.5" width="1.3" height="6.4" fill="#a8946c"/><rect x="855.6" y="751.5" width="1.3" height="6.4" fill="#a8946c"/><rect x="864.6" y="751.5" width="1.3" height="6.4" fill="#a8946c"/><rect x="873.7" y="751" width="1.2" height="11.5" fill="#8e8c88"/><rect x="882.7" y="751.5" width="1.3" height="6.4" fill="#a8946c"/><rect x="891.7" y="751.5" width="1.3" height="6.4" fill="#a8946c"/><rect x="900.7" y="751.5" width="1.3" height="6.4" fill="#a8946c"/><rect x="909.8" y="751" width="1.2" height="22.5" fill="#8e8c88"/><rect x="918.7" y="751.5" width="1.3" height="6.4" fill="#a8946c"/><rect x="927.8" y="751.5" width="1.3" height="6.4" fill="#a8946c"/><rect x="936.8" y="751.5" width="1.3" height="6.4" fill="#a8946c"/><rect x="945.8" y="751" width="1.2" height="11.5" fill="#8e8c88"/><rect x="954.8" y="751.5" width="1.3" height="6.4" fill="#a8946c"/><rect x="963.8" y="751.5" width="1.3" height="6.4" fill="#a8946c"/><rect x="972.9" y="751.5" width="1.3" height="6.4" fill="#a8946c"/><rect x="981.9" y="751" width="1.2" height="22.5" fill="#8e8c88"/><rect x="990.9" y="751.5" width="1.3" height="6.4" fill="#a8946c"/><rect x="999.9" y="751.5" width="1.3" height="6.4" fill="#a8946c"/><rect x="1008.9" y="751.5" width="1.3" height="6.4" fill="#a8946c"/><rect x="1018.0" y="751" width="1.2" height="11.5" fill="#8e8c88"/><rect x="1027.0" y="751.5" width="1.3" height="6.4" fill="#a8946c"/><rect x="1036.0" y="751.5" width="1.3" height="6.4" fill="#a8946c"/><rect x="1045.0" y="751.5" width="1.3" height="6.4" fill="#a8946c"/><rect x="1054.1" y="751" width="1.2" height="22.5" fill="#8e8c88"/><rect x="1063.0" y="751.5" width="1.3" height="6.4" fill="#a8946c"/><rect x="1072.1" y="751.5" width="1.3" height="6.4" fill="#a8946c"/><rect x="1081.1" y="751.5" width="1.3" height="6.4" fill="#a8946c"/><rect x="1090.1" y="751" width="1.2" height="11.5" fill="#8e8c88"/><rect x="1099.1" y="751.5" width="1.3" height="6.4" fill="#a8946c"/><rect x="1108.1" y="751.5" width="1.3" height="6.4" fill="#a8946c"/><rect x="1117.2" y="751.5" width="1.3" height="6.4" fill="#a8946c"/><rect x="1126.2" y="751" width="1.2" height="22.5" fill="#8e8c88"/><rect x="1135.2" y="751.5" width="1.3" height="6.4" fill="#a8946c"/><rect x="1144.2" y="751.5" width="1.3" height="6.4" fill="#a8946c"/><rect x="1153.2" y="751.5" width="1.3" height="6.4" fill="#a8946c"/><rect x="1162.3" y="751" width="1.2" height="11.5" fill="#8e8c88"/><rect x="1171.3" y="751.5" width="1.3" height="6.4" fill="#a8946c"/><rect x="1180.3" y="751.5" width="1.3" height="6.4" fill="#a8946c"/><rect x="1189.3" y="751.5" width="1.3" height="6.4" fill="#a8946c"/><rect x="1198.4" y="751" width="1.2" height="22.5" fill="#8e8c88"/></svg>
<div class="t" style="left:336.5px;top:764.3px;font-size:9.4px;color:#e6dac0">24</div>
<div class="t" style="left:408.7px;top:764.3px;font-size:9.4px;color:#e6dac0">48</div>
<div class="t" style="left:480.9px;top:764.3px;font-size:9.4px;color:#e6dac0">72</div>
<div class="t" style="left:553.0px;top:764.3px;font-size:9.4px;color:#e6dac0">96</div>
<div class="t" style="left:625.1px;top:764.3px;font-size:9.4px;color:#e6dac0">120</div>
<div class="t" style="left:697.3px;top:764.3px;font-size:9.4px;color:#e6dac0">144</div>
<div class="t" style="left:769.5px;top:764.3px;font-size:9.4px;color:#e6dac0">168</div>
<div class="t" style="left:985.9px;top:764.3px;font-size:9.4px;color:#e6dac0">240</div>
<div class="t" style="left:1058.1px;top:764.3px;font-size:9.4px;color:#e6dac0">264</div>
<div class="t" style="left:1130.2px;top:764.3px;font-size:9.4px;color:#e6dac0">288</div>
<div class="t" style="left:267px;top:764.3px;font-size:9.4px;color:#22d890">1</div>
<div class="t" style="left:838.6px;top:763.6px;font-size:11px;letter-spacing:-1px;color:#e2a63c">191</div>
<div class="abs" style="left:836px;top:776.3px;width:1.2px;height:3.8px;background:#e2a63c"></div>
<div class="t" style="left:904.8px;top:763.6px;font-size:11px;font-weight:bold;color:#efe6d2">213</div>
<div class="t" style="left:928.6px;top:763.6px;font-size:11px;font-weight:bold;color:#efe6d2">221</div>
<div class="abs" style="left:264.2px;top:747.2px;width:9px;height:3.6px;border-radius:2px 2px 0 0;background:#14e096"></div>
<div class="abs" style="left:255px;top:786px;width:945px;height:71px;background:#1c1c1e"></div>
<div class="abs" style="left:266px;top:786.6px;width:934px;height:35px;background:#1e1c2c"></div>
<div class="abs" style="left:255px;top:823px;width:945px;height:33px;background:repeating-linear-gradient(90deg,#26262b 0,#26262b 12px,#2c2c31 12px,#2c2c31 24px)"></div>
<div class="abs" style="left:255px;top:856px;width:945px;height:1px;background:#111"></div>
<div class="abs" style="left:332.6px;top:786px;width:1px;height:70px;background:#5a5a5e"></div>
<div class="abs" style="left:404.8px;top:786px;width:1px;height:70px;background:#5a5a5e"></div>
<div class="abs" style="left:476.9px;top:786px;width:1px;height:70px;background:#5a5a5e"></div>
<div class="abs" style="left:549.1px;top:786px;width:1px;height:70px;background:#5a5a5e"></div>
<div class="abs" style="left:621.2px;top:786px;width:1px;height:70px;background:#5a5a5e"></div>
<div class="abs" style="left:693.4px;top:786px;width:1px;height:70px;background:#5a5a5e"></div>
<div class="abs" style="left:765.5px;top:786px;width:1px;height:70px;background:#5a5a5e"></div>
<div class="abs" style="left:837.7px;top:786px;width:1px;height:70px;background:#5a5a5e"></div>
<div class="abs" style="left:909.8px;top:786px;width:1px;height:70px;background:#5a5a5e"></div>
<div class="abs" style="left:982.0px;top:786px;width:1px;height:70px;background:#5a5a5e"></div>
<div class="abs" style="left:1054.1px;top:786px;width:1px;height:70px;background:#5a5a5e"></div>
<div class="abs" style="left:1126.3px;top:786px;width:1px;height:70px;background:#5a5a5e"></div>
<div class="abs" style="left:1198.5px;top:786px;width:1px;height:70px;background:#5a5a5e"></div>
<div class="abs" style="left:255px;top:821.5px;width:945px;height:0.9px;background:#5c4628"></div>
<div class="abs" style="left:264px;top:823px;width:662px;height:33px;background:#1d1d20"></div>
<div class="abs" style="left:263.3px;top:786px;width:3px;height:70px;background:#3c6855"></div>
<div class="abs" style="left:266.3px;top:824.6px;width:30.8px;height:28.6px;background:#c5c5c5;border:0.8px solid #909090;border-radius:2.5px"></div>
<svg class="abs" style="left:273px;top:830px" width="18" height="16" viewBox="0 0 18 16"><rect x="0.5" y="1" width="17" height="14" rx="1" fill="#111"/><path d="M4 2v12M14 2v12" stroke="#555" stroke-width="1"/><path d="M1 4h2M1 7h2M1 10h2M1 13h2M15 4h2M15 7h2M15 10h2M15 13h2" stroke="#666" stroke-width="1"/><rect x="6" y="4" width="6" height="8" fill="#2a2a2a"/></svg>
<div class="abs" style="left:302.3px;top:824.6px;width:18.8px;height:28.6px;background:#c5c5c5;border:0.8px solid #909090;border-radius:2.5px"></div>
<div class="abs" style="left:326.3px;top:824.6px;width:18.8px;height:28.6px;background:#c5c5c5;border:0.8px solid #909090;border-radius:2.5px"></div>
<div class="abs" style="left:350.3px;top:824.6px;width:18.8px;height:28.6px;background:#c5c5c5;border:0.8px solid #909090;border-radius:2.5px"></div>
<div class="abs" style="left:374.3px;top:824.6px;width:18.8px;height:28.6px;background:#c5c5c5;border:0.8px solid #909090;border-radius:2.5px"></div>
<div class="abs" style="left:398.3px;top:824.6px;width:18.8px;height:28.6px;background:#c5c5c5;border:0.8px solid #909090;border-radius:2.5px"></div>
<div class="abs" style="left:422.3px;top:824.6px;width:18.8px;height:28.6px;background:#c5c5c5;border:0.8px solid #909090;border-radius:2.5px"></div>
<div class="abs" style="left:446.3px;top:824.6px;width:18.8px;height:28.6px;background:#c5c5c5;border:0.8px solid #909090;border-radius:2.5px"></div>
<div class="abs" style="left:470.3px;top:824.6px;width:18.8px;height:28.6px;background:#c5c5c5;border:0.8px solid #909090;border-radius:2.5px"></div>
<div class="abs" style="left:494.3px;top:824.6px;width:18.8px;height:28.6px;background:#c5c5c5;border:0.8px solid #909090;border-radius:2.5px"></div>
<div class="abs" style="left:518.3px;top:824.6px;width:18.8px;height:28.6px;background:#c5c5c5;border:0.8px solid #909090;border-radius:2.5px"></div>
<div class="abs" style="left:542.3px;top:824.6px;width:18.8px;height:28.6px;background:#c5c5c5;border:0.8px solid #909090;border-radius:2.5px"></div>
<div class="abs" style="left:566.3px;top:824.6px;width:18.8px;height:28.6px;background:#c5c5c5;border:0.8px solid #909090;border-radius:2.5px"></div>
<div class="abs" style="left:590.3px;top:824.6px;width:18.8px;height:28.6px;background:#c5c5c5;border:0.8px solid #909090;border-radius:2.5px"></div>
<div class="abs" style="left:614.3px;top:824.6px;width:18.8px;height:28.6px;background:#c5c5c5;border:0.8px solid #909090;border-radius:2.5px"></div>
<div class="abs" style="left:638.3px;top:824.6px;width:18.8px;height:28.6px;background:#c5c5c5;border:0.8px solid #909090;border-radius:2.5px"></div>
<div class="abs" style="left:662.3px;top:824.6px;width:18.8px;height:28.6px;background:#c5c5c5;border:0.8px solid #909090;border-radius:2.5px"></div>
<div class="abs" style="left:686.3px;top:824.6px;width:18.8px;height:28.6px;background:#c5c5c5;border:0.8px solid #909090;border-radius:2.5px"></div>
<div class="abs" style="left:710.3px;top:824.6px;width:18.8px;height:28.6px;background:#c5c5c5;border:0.8px solid #909090;border-radius:2.5px"></div>
<div class="abs" style="left:734.3px;top:824.6px;width:18.8px;height:28.6px;background:#c5c5c5;border:0.8px solid #909090;border-radius:2.5px"></div>
<div class="abs" style="left:758.3px;top:824.6px;width:18.8px;height:28.6px;background:#c5c5c5;border:0.8px solid #909090;border-radius:2.5px"></div>
<div class="abs" style="left:782.3px;top:824.6px;width:18.8px;height:28.6px;background:#c5c5c5;border:0.8px solid #909090;border-radius:2.5px"></div>
<div class="abs" style="left:806.3px;top:824.6px;width:18.8px;height:28.6px;background:#c5c5c5;border:0.8px solid #909090;border-radius:2.5px"></div>
<div class="abs" style="left:830.3px;top:824.6px;width:18.8px;height:28.6px;background:#c5c5c5;border:0.8px solid #909090;border-radius:2.5px"></div>
<div class="abs" style="left:854.3px;top:824.6px;width:18.8px;height:28.6px;background:#c5c5c5;border:0.8px solid #909090;border-radius:2.5px"></div>
<div class="abs" style="left:878.3px;top:824.6px;width:18.8px;height:28.6px;background:#c5c5c5;border:0.8px solid #909090;border-radius:2.5px"></div>
<div class="abs" style="left:879.8px;top:828px;width:15.8px;height:22px;background:#8b8b8b;border-radius:3px"></div>
<svg class="abs" style="left:883px;top:834px" width="10" height="10" viewBox="0 0 10 10"><path d="M8.5 0.8v8.4L1.2 5z" fill="#fff"/></svg>
<div class="abs" style="left:902px;top:823px;width:22px;height:31px;background:#e0a23e;border:1.5px solid #14141c;border-radius:3px"></div>
<div class="abs" style="left:907px;top:828px;width:12px;height:12px;border-radius:6px;background:#0a0a0a"></div>
<div class="t" style="left:910px;top:829px;font-size:10px;color:#f3e7d0">8</div>
<div class="abs" style="left:929px;top:828px;width:18px;height:22px;background:#454547;border-radius:4px"></div>
<svg class="abs" style="left:933px;top:834px" width="10" height="10" viewBox="0 0 10 10"><path d="M1.5 0.8v8.4L8.8 5z" fill="#fff"/></svg>
<div class="abs" style="left:266.3px;top:789.3px;width:935px;height:29.4px;background:#6a917e;border:1px solid #a9c4b5;border-right:0;border-radius:1.5px 0 0 1.5px"></div>
<svg class="abs" style="left:0;top:0" width="1200" height="900" viewBox="0 0 1200 900"><path d="M267 818.2L267 812.5L269 814.0L271 815.0L273 813.5L275 812.0L277 811.0L279 810.0L281 811.0L283 811.5L285 811.5L287 810.0L289 809.5L291 808.5L293 810.0L295 811.0L297 812.0L299 814.0L301 814.5L303 813.0L305 811.0L307 808.5L309 807.0L311 807.0L313 806.5L315 805.5L317 804.5L319 802.5L321 801.5L323 801.0L325 802.5L327 803.5L329 805.5L331 807.0L333 807.0L335 806.5L337 805.5L339 805.5L341 806.0L343 806.5L345 806.5L347 805.5L349 804.5L351 803.5L353 802.5L355 804.0L357 805.5L359 808.5L361 810.0L363 811.5L365 811.5L367 810.5L369 810.5L371 811.5L373 811.5L375 812.5L377 811.0L379 809.0L381 808.0L383 806.0L385 805.0L387 805.0L389 806.5L391 808.5L393 808.5L395 808.0L397 807.5L399 807.0L401 807.0L403 808.5L405 808.5L407 809.0L409 807.5L411 805.5L413 804.0L415 802.0L417 803.0L419 803.5L421 805.0L423 806.5L425 807.0L427 808.0L429 808.5L431 809.0L433 811.5L435 812.5L437 814.0L439 814.5L441 813.0L443 811.0L445 810.5L447 809.5L449 810.0L451 811.5L453 812.0L455 812.0L457 811.5L459 811.0L461 812.0L463 812.5L465 814.5L467 815.0L469 815.5L471 814.5L473 812.0L475 810.0L477 808.5L479 807.0L481 806.5L483 807.5L485 807.0L487 805.0L489 804.0L491 804.5L493 805.5L495 806.0L497 808.5L499 810.0L501 809.5L503 808.0L505 806.5L507 805.5L509 806.0L511 805.5L513 806.5L515 806.0L517 806.0L519 805.0L521 804.5L523 805.0L525 807.5L527 809.5L529 811.5L531 813.0L533 813.0L535 812.0L537 810.5L539 810.5L541 810.0L543 809.5L545 809.5L547 808.5L549 806.0L551 804.5L553 804.0L555 805.0L557 805.5L559 807.5L561 809.0L563 809.0L565 807.5L567 806.5L569 806.0L571 805.5L573 805.5L575 805.0L577 805.5L579 803.5L581 802.0L583 799.5L585 800.5L587 802.0L589 804.5L591 805.5L593 807.5L595 807.0L597 807.5L599 808.5L601 809.5L603 811.0L605 812.0L607 812.0L609 811.0L611 809.0L613 808.0L615 808.0L617 809.0L619 809.5L621 811.5L623 812.5L625 812.5L627 812.5L629 812.0L631 813.0L633 814.0L635 814.0L637 815.0L639 814.0L641 811.5L643 809.0L645 807.0L647 806.5L649 806.5L651 807.0L653 808.0L655 806.5L657 807.0L659 806.0L661 807.0L663 808.5L665 809.5L667 811.0L669 810.5L671 809.5L673 808.5L675 806.0L677 805.5L679 806.0L681 807.5L683 807.5L685 807.5L687 808.5L689 808.0L691 808.5L693 811.0L695 812.5L697 814.5L699 815.0L701 814.5L703 813.5L705 812.0L707 811.0L709 810.0L711 810.5L713 810.0L715 809.0L717 808.0L719 807.0L721 806.5L723 807.0L725 808.5L727 809.0L729 810.0L731 810.0L733 808.5L735 806.5L737 805.5L739 805.0L741 804.5L743 804.0L745 804.0L747 803.0L749 801.0L751 799.5L753 800.0L755 802.5L757 803.5L759 806.5L761 807.5L763 807.5L765 807.5L767 806.5L769 807.0L771 808.0L773 808.0L775 809.5L777 808.0L779 806.5L781 805.0L783 805.5L785 806.5L787 808.5L789 810.5L791 812.0L793 812.5L795 812.0L797 811.0L799 811.0L801 811.0L803 811.5L805 812.0L807 811.0L809 808.0L811 806.0L813 804.5L815 804.5L817 805.0L819 806.0L821 807.5L823 807.0L825 807.5L827 807.5L829 806.5L831 808.5L833 809.5L835 809.5L837 809.5L839 808.5L841 807.5L843 805.0L845 805.0L847 806.0L849 807.5L851 809.0L853 809.5L855 810.0L857 810.0L859 811.0L861 812.5L863 814.5L865 816.0L867 816.0L869 816.0L871 814.5L873 813.0L875 811.0L877 810.5L879 810.5L881 811.5L883 811.5L885 810.5L887 809.0L889 809.0L891 809.5L893 811.0L895 812.0L897 812.0L899 812.5L901 809.5L903 808.5L905 805.5L907 804.5L909 805.0L911 804.0L913 804.0L915 803.5L917 803.0L919 802.5L921 803.0L923 804.5L925 806.0L927 808.5L929 809.0L931 809.0L933 808.5L935 807.0L937 807.0L939 807.0L941 807.5L943 808.5L945 807.5L947 806.5L949 805.5L951 806.0L953 807.0L955 808.5L957 811.0L959 812.5L961 812.5L963 812.0L965 810.0L967 809.5L969 809.5L971 809.5L973 808.5L975 808.5L977 806.0L979 804.0L981 803.0L983 802.5L985 803.0L987 805.0L989 805.5L991 807.0L993 806.5L995 806.5L997 806.0L999 805.5L1001 806.5L1003 806.5L1005 806.5L1007 806.0L1009 805.0L1011 803.0L1013 802.5L1015 803.5L1017 806.0L1019 808.5L1021 809.0L1023 810.5L1025 810.0L1027 810.5L1029 811.5L1031 813.5L1033 814.5L1035 815.0L1037 814.5L1039 812.5L1041 811.0L1043 809.0L1045 809.5L1047 809.5L1049 810.5L1051 812.0L1053 812.0L1055 811.5L1057 811.0L1059 811.0L1061 811.5L1063 812.5L1065 813.5L1067 812.5L1069 811.0L1071 809.0L1073 806.5L1075 805.5L1077 804.5L1079 805.5L1081 806.0L1083 806.5L1085 805.5L1087 805.0L1089 806.0L1091 806.5L1093 809.5L1095 811.0L1097 811.0L1099 811.0L1101 810.0L1103 808.0L1105 807.0L1107 808.0L1109 808.0L1111 809.0L1113 808.5L1115 808.5L1117 808.5L1119 807.5L1121 809.0L1123 811.0L1125 813.5L1127 814.5L1129 813.5L1131 813.0L1133 811.5L1135 809.5L1137 808.5L1139 807.5L1141 807.5L1143 806.5L1145 805.0L1147 804.5L1149 803.0L1151 803.0L1153 803.0L1155 805.0L1157 806.5L1159 808.0L1161 807.5L1163 806.5L1165 804.0L1167 803.5L1169 804.5L1171 804.0L1173 804.5L1175 803.5L1177 802.5L1179 801.5L1181 801.5L1183 802.5L1185 804.0L1187 807.5L1189 809.5L1191 809.5L1193 810.0L1195 810.5L1197 810.0L1199 810.5L1200 818.2 Z" fill="#b9cbc1"/><path d="M267 790h4.6l-4.6 5.4z" fill="#f2f6f3"/></svg>
<div class="t" style="left:272.4px;top:792.4px;font-size:9.35px;color:#050505;text-shadow:0 0 0.4px #050505">Losing My Mind - NEFFEX.mp3</div>
<div class="abs" style="left:39px;top:754.4px;width:212px;height:4px;border-radius:2px;background:#8d8da6"></div>
<div class="abs" style="left:36px;top:785px;width:219px;height:1px;background:#141416"></div>
<div class="abs" style="left:250px;top:751px;width:5px;height:106px;background:#1b1b1d"></div>
<div class="t" style="left:43px;top:764px;font-size:12px;color:#e4e4e4">2</div>
<div class="abs" style="left:42px;top:786px;width:206px;height:36px;background:#3e3f4a;border:1px solid #c8962f"></div>
<div class="t" style="left:51px;top:803.5px;font-size:10.1px;color:#e2e2e6">Audio</div>
<div class="abs" style="left:43px;top:823px;width:204px;height:33px;background:#33343c"></div>
<div class="t" style="left:51px;top:838.5px;font-size:10.1px;color:#e2e2e6">Dessin (2)</div>
<div class="abs" style="left:132px;top:793px;width:22px;height:22px;border-radius:11px;border:1.5px solid #d19a33;background:#3a3a44"></div>
<div class="t" style="left:137px;top:801px;font-size:6.5px;color:#bdbdc4">0dB</div>
<div class="abs" style="left:153px;top:800px;width:2px;height:6px;background:#3e3f4a"></div>
<div class="abs" style="left:132px;top:828px;width:22px;height:22px;border-radius:11px;border:1.5px solid #d19a33;background:#4a4b56"></div>
<div class="t" style="left:135px;top:836px;font-size:6.5px;color:#c9c9d0">100%</div>
<svg class="abs" style="left:0;top:0" width="1200" height="900" viewBox="0 0 1200 900"><g fill="none" stroke="#fff" stroke-width="1" stroke-linejoin="round"><path d="M69 761.6v4.6M66.7 763.9h4.6"/><path d="M66 767.4h6l2.2 2.2h-10.4z" fill="#1c1c20"/><path d="M64.2 770.8h9.6l1.8 2h-13.2z" fill="#1c1c20"/><path d="M62.6 774.2h12.8l1 2.4h-14.8z" fill="#1c1c20"/></g><rect x="87.6" y="764" width="12" height="13" rx="2" fill="#fff" stroke="#0a0a0a" stroke-width="0.6"/><rect x="91.4" y="762.4" width="4.6" height="3" rx="1.2" fill="#fff" stroke="#666" stroke-width="0.6"/><rect x="91.6" y="768" width="10" height="10" rx="1" fill="#e0e0e0" stroke="#555" stroke-width="0.7"/><path d="M93.6 770.8h6M93.6 773h6M93.6 775.2h6" stroke="#666" stroke-width="0.9"/><g transform="translate(121.5 769.6) scale(0.82)"><rect x="-8.6" y="-6.8" width="17.2" height="13.6" rx="2.6" fill="#fff" stroke="#0a0a0a" stroke-width="0.8"/><path d="M-2.4 -6.8h4.8v5.2h3.6l-6 5.8l-6-5.8h3.6z" fill="#0c0c10"/></g><rect x="139" y="763.4" width="18" height="12.4" rx="2" fill="none" stroke="#fff" stroke-width="1.1" stroke-dasharray="2.6 1.4"/><rect x="141.4" y="766.6" width="13.2" height="5.8" rx="1" fill="#f2b53c"/><path d="M55.8 790.6l1 3.9l4 1l-4 1l-1 3.9l-1-3.9l-4-1l4-1z" fill="#e8e8ec"/><g transform="translate(56 830.6) rotate(45)"><path d="M-1.7 -5.6a1.7 1.7 0 0 1 3.4 0v8.2l-1.7 3.6l-1.7 -3.6z" fill="#fff" stroke="#0c0c10" stroke-width="0.7"/><path d="M-1.7 -3.4h3.4" stroke="#555" stroke-width="0.8"/></g><path d="M163.4 801.2h3.2l4.8-4.4v14.4l-4.8-4.4h-3.2z" fill="#fff" stroke="#101014" stroke-width="0.7" stroke-linejoin="round"/><path d="M173.6 801a3.8 3.8 0 0 1 0 6" fill="none" stroke="#e0a53c" stroke-width="1.2" stroke-linecap="round"/><path d="M175.6 798.4a7 7 0 0 1 0 11.2" fill="none" stroke="#e0a53c" stroke-width="1.2" stroke-linecap="round"/><g transform="translate(199 804.1) scale(1.08)"><rect x="-8.6" y="-6.8" width="17.2" height="13.6" rx="2.6" fill="#fff" stroke="#0a0a0a" stroke-width="0.8"/><path d="M-2.4 -6.8h4.8v5.2h3.6l-6 5.8l-6-5.8h3.6z" fill="#0c0c10"/></g><path d="M219 798.5h16M219 804.1h16M219 809.7h16" stroke="#fff" stroke-width="2.4" stroke-linecap="round"/><path d="M161.4 839c3-5 6.4-7 9.6-7s6.6 2 9.6 7c-3 5-6.4 7-9.6 7s-6.6-2-9.6-7z" fill="#fff" stroke="#0a0a0e" stroke-width="0.8"/><circle cx="171" cy="839" r="5.4" fill="#e8a21c"/><circle cx="171" cy="839" r="3.6" fill="#0a0a0a"/><circle cx="172.6" cy="837.4" r="1.5" fill="#fff"/><g><circle cx="199" cy="839" r="9.4" fill="#fff" stroke="#0a0a0e" stroke-width="0.6"/><circle cx="197.6" cy="841" r="6.8" fill="#2a2a30"/><circle cx="197.6" cy="841" r="5.2" fill="#fff"/><circle cx="196.4" cy="842.6" r="4" fill="#2a2a30"/><circle cx="196.2" cy="843" r="2.6" fill="#fff"/><path d="M189 845l4 4.4l5 0z" fill="#33343c"/></g><path d="M219 833.1h16M219 838.7h16M219 844.3h16" stroke="#fff" stroke-width="2.4" stroke-linecap="round"/></svg>
<div id="status"></div>
<div class="t" style="left:48px;top:864px;font-size:11px;color:#dcdcdc">1 feuilles: 8 images (213 à 221)</div>
<svg class="abs" style="left:0;top:0" width="1200" height="900" viewBox="0 0 1200 900"><rect x="660.4" y="865.6" width="19.4" height="7.6" rx="1" fill="#10101a"/><rect x="661" y="866.2" width="11.6" height="6.4" fill="#f2b53c"/><rect x="673.8" y="866.2" width="5.4" height="6.4" fill="#f2b53c"/><path d="M668.6 867.4l2 2l-2 2M675.4 867.4l2 2l-2 2" stroke="#222" stroke-width="0.9" fill="none"/><rect x="687" y="865.6" width="19" height="7.6" rx="1" fill="#0e0e0e"/><rect x="687.6" y="866.2" width="11.4" height="6.4" fill="#d4d4d4"/><rect x="700.2" y="866.2" width="5.2" height="6.4" fill="#d4d4d4"/><path d="M695 867.4l2 2l-2 2" stroke="#222" stroke-width="0.9" fill="none"/><rect x="701.6" y="867.6" width="2.4" height="3.8" rx="0.8" fill="#222"/><rect x="715.2" y="863" width="1" height="13" fill="#4c4c4c"/><rect x="723.4" y="864.6" width="1" height="9.6" fill="#bdbdbd"/><rect x="725.6" y="866.2" width="4.6" height="6.4" fill="#d4d4d4"/><rect x="731.2" y="866.2" width="4.6" height="6.4" fill="#d4d4d4"/><rect x="736.8" y="866.2" width="3.6" height="6.4" fill="#d4d4d4"/><rect x="749.6" y="866.2" width="4.6" height="6.4" fill="#d4d4d4"/><rect x="755.2" y="866.2" width="4.6" height="6.4" fill="#d4d4d4"/><rect x="760.8" y="866.2" width="7" height="6.4" fill="#d4d4d4"/><circle cx="761.4" cy="871.4" r="3.6" fill="#e8e8e8" stroke="#0c0c0c" stroke-width="2.6"/><circle cx="761.4" cy="871.4" r="3.6" fill="#333" stroke="#fff" stroke-width="1.3"/><path d="M764 874.2l2.6 2.6" stroke="#0c0c0c" stroke-width="3"/><path d="M764 874.2l2.6 2.6" stroke="#fff" stroke-width="1.5"/><path d="M760.4 870.2v2.4M762.4 870.2v2.4" stroke="#ddd" stroke-width="0.8"/><rect x="776.4" y="864.2" width="1" height="10.4" fill="#bdbdbd"/><rect x="793.6" y="864.2" width="1" height="10.4" fill="#bdbdbd"/><rect x="778.6" y="866.2" width="1.2" height="6.4" fill="#d4d4d4"/><rect x="780.7" y="866.2" width="1.2" height="6.4" fill="#d4d4d4"/><rect x="782.8" y="866.2" width="1.2" height="6.4" fill="#d4d4d4"/><rect x="784.9" y="866.2" width="1.2" height="6.4" fill="#d4d4d4"/><rect x="787" y="866.2" width="1.2" height="6.4" fill="#d4d4d4"/><rect x="789.1" y="866.2" width="1.2" height="6.4" fill="#d4d4d4"/><rect x="791.2" y="866.2" width="1.2" height="6.4" fill="#d4d4d4"/></svg>
<div id="bottom"></div><div id="home"></div>
</body></html>
